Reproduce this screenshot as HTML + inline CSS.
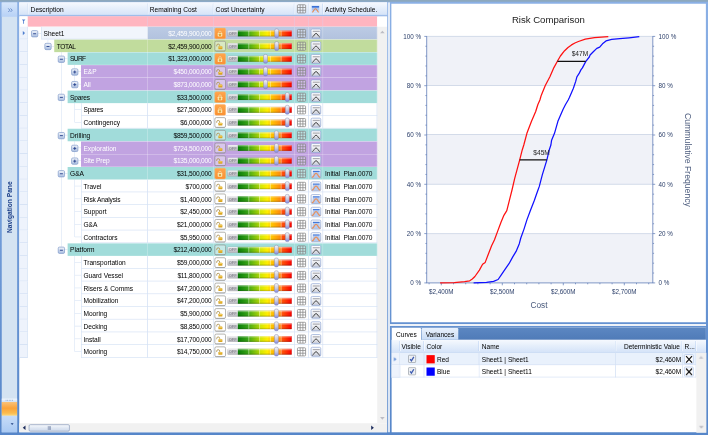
<!DOCTYPE html>
<html><head><meta charset="utf-8"><title>Risk Comparison</title><style>
html,body{margin:0;padding:0}
body{width:708px;height:435px;overflow:hidden;position:relative;background:linear-gradient(#8bb0e5,#7ea6df 30%,#5686c9);font-family:"Liberation Sans",sans-serif;color:#000}
#w{position:absolute;left:0;top:0;width:5664px;height:3480px;overflow:hidden;transform:scale(0.125);transform-origin:0 0;will-change:transform;font-size:52.8px}
#w div{position:absolute}
.t{white-space:nowrap}
.ic{position:absolute;overflow:visible}
</style></head><body>
<svg width="0" height="0" style="position:absolute">
<defs>
<linearGradient id="gsl" x1="0" x2="1" y1="0" y2="0">
<stop offset="0" stop-color="#087c08"/><stop offset="0.19" stop-color="#38a416"/><stop offset="0.21" stop-color="#4aac12"/><stop offset="0.39" stop-color="#a6d206"/>
<stop offset="0.41" stop-color="#cfe604"/><stop offset="0.55" stop-color="#ffee00"/><stop offset="0.61" stop-color="#ffcc00"/><stop offset="0.79" stop-color="#ff8a0a"/><stop offset="0.81" stop-color="#ff5c0a"/><stop offset="1" stop-color="#fa0000"/>
</linearGradient>
<linearGradient id="gsh" x1="0" x2="0" y1="0" y2="1">
<stop offset="0" stop-color="#fff" stop-opacity=".55"/><stop offset="0.35" stop-color="#fff" stop-opacity="0"/><stop offset="0.7" stop-color="#000" stop-opacity="0"/><stop offset="1" stop-color="#000" stop-opacity=".22"/>
</linearGradient>
<linearGradient id="goff" x1="0" x2="0" y1="0" y2="1">
<stop offset="0" stop-color="#f0f0f2"/><stop offset="0.5" stop-color="#cdcdd2"/><stop offset="1" stop-color="#b6b6bc"/>
</linearGradient>
<linearGradient id="gth" x1="0" x2="0" y1="0" y2="1">
<stop offset="0" stop-color="#f4f4fa"/><stop offset="0.55" stop-color="#c8c8dc"/><stop offset="1" stop-color="#7f86e8"/>
</linearGradient>
<linearGradient id="glk" x1="0" x2="0" y1="0" y2="1">
<stop offset="0" stop-color="#ffa64d"/><stop offset="1" stop-color="#f98f30"/>
</linearGradient>
<linearGradient id="gcb" x1="0" x2="0" y1="0" y2="1">
<stop offset="0" stop-color="#ffffff"/><stop offset="0.35" stop-color="#f4f5f8"/><stop offset="1" stop-color="#c6cad6"/>
</linearGradient>
<linearGradient id="gex" x1="0" x2="0" y1="0" y2="1">
<stop offset="0" stop-color="#f4f7fc"/><stop offset="1" stop-color="#a9bde0"/>
</linearGradient>
<symbol id="slider" viewBox="0 0 65 10" overflow="visible">
 <rect x="0" y="1.900" width="64.600" height="6.200" rx="1" fill="#8e8e98" opacity=".5"/>
 <rect x="0.3" y="2.050" width="10.600" height="5.800" rx="0.8" fill="url(#goff)"/>
 <rect x="10.500" y="2.050" width="53.800" height="5.800" fill="url(#gsl)"/>
 <rect x="10.500" y="2.050" width="53.800" height="5.800" fill="url(#gsh)"/>
 <path d="M21.400 2.100V7.800M32.200 2.100V7.800M43 2.100V7.800M53.800 2.100V7.800" stroke="#fff" stroke-opacity=".78" stroke-width=".55"/>
 <text x="1.300" y="6.500" font-family="Liberation Sans, sans-serif" font-weight="bold" font-size="3.700" fill="#8e8e96" textLength="8.200" lengthAdjust="spacingAndGlyphs">OFF</text>
</symbol>
<symbol id="thumb" viewBox="0 0 5 10" overflow="visible">
 <rect x="0.4" y="0.3" width="4.1" height="9.3" rx="1.6" fill="url(#gth)" stroke="#8a8aa8" stroke-width=".5"/>
</symbol>
<symbol id="lockon" viewBox="0 0 11 11" overflow="visible">
 <rect x="0.1" y="0.1" width="10.9" height="10.8" rx="1.4" fill="url(#glk)" stroke="#ffb56a" stroke-width=".5"/>
 <path d="M4 5.200V4.500a1.350 1.350 0 0 1 2.700 0V5.200" fill="none" stroke="#f1d9a4" stroke-width=".75"/>
 <rect x="3" y="5" width="4.600" height="3.700" rx=".5" fill="#fbe7ae"/>
 <rect x="4.200" y="5.900" width="2.200" height="2.100" rx=".4" fill="#e0a236"/>
</symbol>
<symbol id="lockoff" viewBox="0 0 11.400 10.500" overflow="visible">
 <rect x="0.35" y="0.35" width="10.700" height="9.800" rx="1.400" fill="#fff" fill-opacity=".38" stroke="#8c8c88" stroke-width=".65"/>
 <path d="M.9 10.150H10.500" stroke="#777" stroke-width=".5" opacity=".6"/>
 <path d="M2.200 5.500V4.700a1.500 1.500 0 0 1 3 0V5.600" fill="none" stroke="#b29a5e" stroke-width=".95"/>
 <rect x="3.900" y="5.400" width="4" height="2.900" rx=".5" fill="#dba622"/>
 <rect x="4.300" y="5.700" width="3.200" height="1" rx=".4" fill="#f3d060"/>
</symbol>
<symbol id="gridic" viewBox="0 0 9 9" overflow="visible">
 <rect x="0.3" y="0.3" width="8.4" height="8.4" rx=".9" fill="#fff" fill-opacity=".28"/>
 <path d="M0.3 1.1a.8 .8 0 0 1 .8-.8H7.9a.8 .8 0 0 1 .8 .8V7.9a.8 .8 0 0 1-.8 .8H1.1a.8 .8 0 0 1-.8-.8ZM3.1 .3V8.7M5.9 .3V8.7M.3 3.1H8.7M.3 5.9H8.7" fill="none" stroke="#868686" stroke-width=".78"/>
</symbol>
<symbol id="chartk" viewBox="0 0 10.300 9.600" overflow="visible">
 <rect x="0.3" y="0.3" width="9.700" height="9" rx="1.300" fill="url(#gcb)" stroke="#93a9d6" stroke-width=".75"/>
 <rect x="2" y="2" width="7" height="1.200" fill="#acacb2"/>
 <path d="M1.900 8.200C3.400 7.400 3.800 4.700 5.300 4.700S7.200 7.400 8.700 8.200" fill="none" stroke="#444" stroke-width=".98" stroke-linecap="round"/>
</symbol>
<symbol id="chartc" viewBox="0 0 10.300 9.600" overflow="visible">
 <rect x="0.3" y="0.3" width="9.700" height="9" rx="1.300" fill="url(#gcb)" stroke="#93a9d6" stroke-width=".75"/>
 <rect x="2.100" y="3.100" width="6.800" height="5.600" fill="#b2caf2"/>
 <rect x="2.100" y="2.050" width="6.800" height="1.150" fill="#3a72d8"/>
 <path d="M1.700 8.400C3.300 7.600 3.700 4.700 5.300 4.700S7.300 7.600 8.900 8.400" fill="none" stroke="#e8905a" stroke-width="1.250" stroke-linecap="round"/>
</symbol>
<symbol id="charth" viewBox="0 0 7.200 6.600" overflow="visible">
 <rect x="-.2" y="-.2" width="7.600" height="7" fill="#a9c5f3" stroke="#d9e6fa" stroke-width=".4"/>
 <rect x="0" y="4.600" width="7.200" height="2" fill="#d3e2fa"/>
 <rect x="0" y="0" width="7.200" height="1.600" fill="#3a70d4"/>
 <path d="M.4 6.300C1.800 5.700 2.100 2.700 3.600 2.700S5.400 5.700 6.800 6.300" fill="none" stroke="#e8894a" stroke-width="1.050"/>
</symbol>
<symbol id="exm" viewBox="0 0 7 7" overflow="visible">
 <rect x="0.35" y="0.35" width="6.3" height="6.3" rx="1.2" fill="url(#gex)" stroke="#7f99c8" stroke-width=".7"/>
 <path d="M2 3.500H5" stroke="#24408a" stroke-width=".9"/>
</symbol>
<symbol id="exp" viewBox="0 0 7 7" overflow="visible">
 <rect x="0.35" y="0.35" width="6.3" height="6.3" rx="1.2" fill="url(#gex)" stroke="#7f99c8" stroke-width=".7"/>
 <path d="M2 3.500H5M3.500 2V5" stroke="#24408a" stroke-width=".9"/>
</symbol>
</defs></svg>
<div id="w">
<div style="left:0px;top:0px;width:5664px;height:13.6px;background:#8da8bd"></div>
<div style="left:14.4px;top:20px;width:122.4px;height:3438.4px;background:#d4e3f2"></div>
<div style="left:14.4px;top:20px;width:122.4px;height:114.4px;background:linear-gradient(#d6e6fb,#b7d1f6)"></div>
<svg class="ic" style="left:63.2px;top:64px;width:40px;height:35.2px" viewBox="0 0 5 4.400"><path d="M.4 .4L2 2.200L.4 4M2.700 .4L4.300 2.200L2.700 4" fill="none" stroke="#5078bc" stroke-width=".75"/></svg>
<div style="left:14.4px;top:3188.8px;width:122.4px;height:27.2px;background:linear-gradient(#f4f8fd,#cfe0f5)"></div>
<svg class="ic" style="left:43.2px;top:3196.8px;width:64px;height:11.2px" viewBox="0 0 8 1.400"><path d="M.3 .7H7.900" stroke="#6f93cc" stroke-width=".8" stroke-dasharray=".75 .85"/></svg>
<div style="left:14.4px;top:3216px;width:122.4px;height:109.6px;background:linear-gradient(#f9c27a,#fba33a 45%,#fbbb4e 80%,#fdd77a)"></div>
<div style="left:14.4px;top:3327.2px;width:122.4px;height:131.2px;background:linear-gradient(#c7dcf8,#a9c9f3)"></div>
<svg class="ic" style="left:82.4px;top:3380.8px;width:32px;height:24px" viewBox="0 0 4 3"><path d="M.4 .5H3.400L1.900 2.400Z" fill="#1f3f80"/></svg>
<div class="t" style="left:76.8px;top:1658.4px;font-size:53.2px;font-weight:bold;color:#1c3f88;transform:translate(-50%,-50%) rotate(-90deg)">Navigation Pane</div>
<div style="left:154.4px;top:19.2px;width:2942.4px;height:3439.2px;background:#fff"></div>
<div style="left:3105.2px;top:19.2px;width:14px;height:3439.2px;background:#eef3fa"></div>
<div style="left:154.4px;top:19.2px;width:2942.4px;height:103.2px;background:linear-gradient(#f6f9fe,#e6effb 45%,#d5e3f8)"></div>
<div style="left:154.4px;top:119.2px;width:2942.4px;height:12.8px;background:#9fbdea"></div>
<div style="left:217.6px;top:28.8px;width:4.8px;height:86.4px;background:#b9d0f1"></div>
<div style="left:222.4px;top:28.8px;width:4.8px;height:86.4px;background:#fff"></div>
<div style="left:1176px;top:28.8px;width:4.8px;height:86.4px;background:#b9d0f1"></div>
<div style="left:1180.8px;top:28.8px;width:4.8px;height:86.4px;background:#fff"></div>
<div style="left:1703.2px;top:28.8px;width:4.8px;height:86.4px;background:#b9d0f1"></div>
<div style="left:1708px;top:28.8px;width:4.8px;height:86.4px;background:#fff"></div>
<div style="left:2351.2px;top:28.8px;width:4.8px;height:86.4px;background:#b9d0f1"></div>
<div style="left:2356px;top:28.8px;width:4.8px;height:86.4px;background:#fff"></div>
<div style="left:2464px;top:28.8px;width:4.8px;height:86.4px;background:#b9d0f1"></div>
<div style="left:2468.8px;top:28.8px;width:4.8px;height:86.4px;background:#fff"></div>
<div style="left:2578.4px;top:28.8px;width:4.8px;height:86.4px;background:#b9d0f1"></div>
<div style="left:2583.2px;top:28.8px;width:4.8px;height:86.4px;background:#fff"></div>
<div class="t" style="left:244.8px;top:28px;height:100.8px;line-height:100.8px;font-size:52.96px;">Description</div>
<div class="t" style="left:1197.6px;top:28px;height:100.8px;line-height:100.8px;font-size:52.96px;">Remaining Cost</div>
<div class="t" style="left:1724.8px;top:28px;height:100.8px;line-height:100.8px;font-size:52.96px;">Cost Uncertainty</div>
<div class="t" style="left:2600px;top:28px;height:100.8px;line-height:100.8px;font-size:52.96px;">Activity Schedule.</div>
<svg class="ic" style="left:2376.8px;top:35.2px;width:70.4px;height:72px" viewBox="0 0 8.80 9.00"><use href="#gridic" width="8.80" height="9.00"/></svg>
<svg class="ic" style="left:2495.2px;top:48px;width:57.6px;height:52.8px" viewBox="0 0 7.20 6.60"><use href="#charth" width="7.20" height="6.60"/></svg>
<div style="left:156.8px;top:130.4px;width:64.8px;height:82.4px;background:#fff"></div>
<div style="left:221.6px;top:130.4px;width:2796.8px;height:82.4px;background:#ffb5c0"></div>
<div style="left:1177.6px;top:132.8px;width:5.2px;height:80px;background:#e9c6dc"></div>
<div style="left:1704.8px;top:132.8px;width:5.2px;height:80px;background:#e9c6dc"></div>
<div style="left:2352.8px;top:132.8px;width:5.2px;height:80px;background:#e9c6dc"></div>
<div style="left:2465.6px;top:132.8px;width:5.2px;height:80px;background:#e9c6dc"></div>
<div style="left:2580px;top:132.8px;width:5.2px;height:80px;background:#e9c6dc"></div>
<svg class="ic" style="left:172.8px;top:153.6px;width:32px;height:40px" viewBox="0 0 4 5"><path d="M.2 .3H3.800L2.400 1.700V4.600H1.600V1.700Z" fill="#4a7ad0"/></svg>
<div style="left:3018.4px;top:132.8px;width:78.4px;height:80.8px;background:#fff"></div>
<div style="left:3018.4px;top:213.6px;width:78.4px;height:3172.8px;background:#f1f1f1"></div>
<svg class="ic" style="left:3039.2px;top:242.4px;width:40px;height:27.2px" viewBox="0 0 5 3.400"><path d="M.2 3.100L2.500 .4L4.800 3.100Z" fill="#bcbcc4"/></svg>
<svg class="ic" style="left:3039.2px;top:3334.4px;width:40px;height:27.2px" viewBox="0 0 5 3.400"><path d="M.2 .3L2.500 3L4.800 .3Z" fill="#bcbcc4"/></svg>
<div style="left:154.4px;top:3386.4px;width:2942.4px;height:72px;background:#f1f1f1"></div>
<svg class="ic" style="left:179.2px;top:3402.4px;width:27.2px;height:40px" viewBox="0 0 3.400 5"><path d="M3.100 .2L.4 2.500L3.100 4.800Z" fill="#1c2c5c"/></svg>
<svg class="ic" style="left:2967.2px;top:3402.4px;width:27.2px;height:40px" viewBox="0 0 3.400 5"><path d="M.3 .2L3 2.500L.3 4.800Z" fill="#1c2c5c"/></svg>
<div style="left:230.4px;top:3395.2px;width:328px;height:56.8px;background:linear-gradient(#f7f9fc,#dfe7f3 50%,#cfdaec);border:5.6px solid #7f93b8;border-radius:12.8px;box-sizing:border-box"></div>
<svg class="ic" style="left:382.4px;top:3408.8px;width:25.6px;height:30.4px" viewBox="0 0 3.200 3.800"><path d="M.5 0V3.800M1.600 0V3.800M2.700 0V3.800" stroke="#5f7299" stroke-width=".55"/></svg>
<div style="left:302.4px;top:266.8px;width:28.8px;height:5.12px;background:#dbe6f6"></div>
<div style="left:380.64px;top:315.44px;width:5.12px;height:28.56px;background:#dbe6f6"></div>
<div style="left:409.6px;top:368.64px;width:24px;height:5.12px;background:#dbe6f6"></div>
<div style="left:487.84px;top:417.36px;width:5.12px;height:1556.48px;background:#dbe6f6"></div>
<div style="left:516.8px;top:467.28px;width:24px;height:5.12px;background:#dbe6f6"></div>
<div style="left:516.8px;top:772.88px;width:24px;height:5.12px;background:#dbe6f6"></div>
<div style="left:516.8px;top:1078.48px;width:24px;height:5.12px;background:#dbe6f6"></div>
<div style="left:516.8px;top:1384.08px;width:24px;height:5.12px;background:#dbe6f6"></div>
<div style="left:516.8px;top:1995.28px;width:24px;height:5.12px;background:#dbe6f6"></div>
<div style="left:595.04px;top:519.2px;width:5.12px;height:154.4px;background:#dbe6f6"></div>
<div style="left:624px;top:569.2px;width:24px;height:5.12px;background:#dbe6f6"></div>
<div style="left:624px;top:671.04px;width:24px;height:5.12px;background:#dbe6f6"></div>
<div style="left:595.04px;top:824.8px;width:5.12px;height:154.4px;background:#dbe6f6"></div>
<div style="left:597.6px;top:874.72px;width:50.4px;height:5.12px;background:#dbe6f6"></div>
<div style="left:597.6px;top:976.64px;width:50.4px;height:5.12px;background:#dbe6f6"></div>
<div style="left:595.04px;top:1130.4px;width:5.12px;height:154.4px;background:#dbe6f6"></div>
<div style="left:624px;top:1180.32px;width:24px;height:5.12px;background:#dbe6f6"></div>
<div style="left:624px;top:1282.24px;width:24px;height:5.12px;background:#dbe6f6"></div>
<div style="left:595.04px;top:1436px;width:5.12px;height:460px;background:#dbe6f6"></div>
<div style="left:597.6px;top:1485.92px;width:50.4px;height:5.12px;background:#dbe6f6"></div>
<div style="left:597.6px;top:1587.84px;width:50.4px;height:5.12px;background:#dbe6f6"></div>
<div style="left:597.6px;top:1689.68px;width:50.4px;height:5.12px;background:#dbe6f6"></div>
<div style="left:597.6px;top:1791.52px;width:50.4px;height:5.12px;background:#dbe6f6"></div>
<div style="left:597.6px;top:1893.36px;width:50.4px;height:5.12px;background:#dbe6f6"></div>
<div style="left:595.04px;top:2047.12px;width:5.12px;height:765.6px;background:#dbe6f6"></div>
<div style="left:597.6px;top:2097.12px;width:50.4px;height:5.12px;background:#dbe6f6"></div>
<div style="left:597.6px;top:2198.96px;width:50.4px;height:5.12px;background:#dbe6f6"></div>
<div style="left:597.6px;top:2300.88px;width:50.4px;height:5.12px;background:#dbe6f6"></div>
<div style="left:597.6px;top:2402.72px;width:50.4px;height:5.12px;background:#dbe6f6"></div>
<div style="left:597.6px;top:2504.56px;width:50.4px;height:5.12px;background:#dbe6f6"></div>
<div style="left:597.6px;top:2606.48px;width:50.4px;height:5.12px;background:#dbe6f6"></div>
<div style="left:597.6px;top:2708.32px;width:50.4px;height:5.12px;background:#dbe6f6"></div>
<div style="left:597.6px;top:2810.16px;width:50.4px;height:5.12px;background:#dbe6f6"></div>
<div style="left:156.8px;top:213.6px;width:64.8px;height:101.84px;background:#eef3fc;border-bottom:5.6px solid #c9d9f1;border-right:5.12px solid #d3e0f4;box-sizing:border-box"></div>
<div style="left:331.2px;top:213.6px;width:848.8px;height:101.84px;background:#f1f5fc;border-left:5.12px solid #d3e0f4;border-bottom:5.12px solid #d3e0f4;box-sizing:border-box"></div>
<div style="left:1180px;top:213.6px;width:1838.4px;height:101.84px;background:linear-gradient(#bccbe4,#b2c2de)"></div>
<div style="left:1177.44px;top:213.6px;width:5.12px;height:101.84px;background:rgba(255,255,255,.32)"></div>
<div style="left:1704.64px;top:213.6px;width:5.12px;height:101.84px;background:rgba(255,255,255,.32)"></div>
<div style="left:2352.64px;top:213.6px;width:5.12px;height:101.84px;background:rgba(255,255,255,.32)"></div>
<div style="left:2465.44px;top:213.6px;width:5.12px;height:101.84px;background:rgba(255,255,255,.32)"></div>
<div style="left:2579.84px;top:213.6px;width:5.12px;height:101.84px;background:rgba(255,255,255,.32)"></div>
<div style="left:3013.28px;top:213.6px;width:5.12px;height:101.84px;background:rgba(255,255,255,.3)"></div>
<div class="t" style="left:348px;top:213.6px;height:101.864px;line-height:111.464px;letter-spacing:0px;color:#000">Sheet1</div>
<div class="t" style="left:1180px;width:511.2px;text-align:right;top:213.6px;height:101.864px;line-height:111.464px;letter-spacing:-1.6px;color:#fff">$2,459,900,000</div>
<svg class="ic" style="left:248.8px;top:242px;width:56px;height:56px" viewBox="0 0 7.00 7.00"><use href="#exm" width="7.00" height="7.00"/></svg>
<svg class="ic" style="left:1716.8px;top:224.4px;width:88.8px;height:87.2px" viewBox="0 0 11.10 10.90"><use href="#lockon" width="11.10" height="10.90"/></svg>
<svg class="ic" style="left:1819.2px;top:227.6px;width:520px;height:80px" viewBox="0 0 65.00 10.00"><use href="#slider" width="65.00" height="10.00"/></svg>
<svg class="ic" style="left:2194px;top:228.8px;width:39.2px;height:76.8px" viewBox="0 0 4.90 9.60"><use href="#thumb" width="4.90" height="9.60"/></svg>
<svg class="ic" style="left:2376.8px;top:233.2px;width:70.4px;height:69.6px" viewBox="0 0 8.80 8.70"><use href="#gridic" width="8.80" height="8.70"/></svg>
<svg class="ic" style="left:2486.4px;top:229.6px;width:82.4px;height:76.8px" viewBox="0 0 10.30 9.60"><use href="#chartk" width="10.30" height="9.60"/></svg>
<div style="left:156.8px;top:315.44px;width:64.8px;height:101.84px;background:#eef3fc;border-bottom:5.6px solid #c9d9f1;border-right:5.12px solid #d3e0f4;box-sizing:border-box"></div>
<div style="left:433.6px;top:317.2px;width:2584.8px;height:100.08px;background:#c1dc9d"></div>
<div style="left:1177.44px;top:315.44px;width:5.12px;height:101.84px;background:rgba(255,255,255,.32)"></div>
<div style="left:1704.64px;top:315.44px;width:5.12px;height:101.84px;background:rgba(255,255,255,.32)"></div>
<div style="left:2352.64px;top:315.44px;width:5.12px;height:101.84px;background:rgba(255,255,255,.32)"></div>
<div style="left:2465.44px;top:315.44px;width:5.12px;height:101.84px;background:rgba(255,255,255,.32)"></div>
<div style="left:2579.84px;top:315.44px;width:5.12px;height:101.84px;background:rgba(255,255,255,.32)"></div>
<div style="left:3013.28px;top:315.44px;width:5.12px;height:101.84px;background:rgba(255,255,255,.3)"></div>
<div class="t" style="left:453.2px;top:315.44px;height:101.864px;line-height:111.464px;letter-spacing:-2.72px;color:#000">TOTAL</div>
<div class="t" style="left:1180px;width:511.2px;text-align:right;top:315.44px;height:101.864px;line-height:111.464px;letter-spacing:-1.6px;color:#000">$2,459,900,000</div>
<svg class="ic" style="left:356px;top:343.84px;width:56px;height:56px" viewBox="0 0 7.00 7.00"><use href="#exm" width="7.00" height="7.00"/></svg>
<svg class="ic" style="left:1716px;top:327.04px;width:91.2px;height:84px" viewBox="0 0 11.40 10.50"><use href="#lockoff" width="11.40" height="10.50"/></svg>
<svg class="ic" style="left:1819.2px;top:329.44px;width:520px;height:80px" viewBox="0 0 65.00 10.00"><use href="#slider" width="65.00" height="10.00"/></svg>
<svg class="ic" style="left:2194px;top:330.64px;width:39.2px;height:76.8px" viewBox="0 0 4.90 9.60"><use href="#thumb" width="4.90" height="9.60"/></svg>
<svg class="ic" style="left:2376.8px;top:335.04px;width:70.4px;height:69.6px" viewBox="0 0 8.80 8.70"><use href="#gridic" width="8.80" height="8.70"/></svg>
<svg class="ic" style="left:2486.4px;top:331.44px;width:82.4px;height:76.8px" viewBox="0 0 10.30 9.60"><use href="#chartk" width="10.30" height="9.60"/></svg>
<div style="left:156.8px;top:417.36px;width:64.8px;height:101.84px;background:#eef3fc;border-bottom:5.6px solid #c9d9f1;border-right:5.12px solid #d3e0f4;box-sizing:border-box"></div>
<div style="left:540.8px;top:419.12px;width:2477.6px;height:100.08px;background:#a1dcda"></div>
<div style="left:1177.44px;top:417.36px;width:5.12px;height:101.84px;background:rgba(255,255,255,.32)"></div>
<div style="left:1704.64px;top:417.36px;width:5.12px;height:101.84px;background:rgba(255,255,255,.32)"></div>
<div style="left:2352.64px;top:417.36px;width:5.12px;height:101.84px;background:rgba(255,255,255,.32)"></div>
<div style="left:2465.44px;top:417.36px;width:5.12px;height:101.84px;background:rgba(255,255,255,.32)"></div>
<div style="left:2579.84px;top:417.36px;width:5.12px;height:101.84px;background:rgba(255,255,255,.32)"></div>
<div style="left:3013.28px;top:417.36px;width:5.12px;height:101.84px;background:rgba(255,255,255,.3)"></div>
<div class="t" style="left:560.4px;top:417.36px;height:101.864px;line-height:111.464px;letter-spacing:-4.96px;color:#000">SURF</div>
<div class="t" style="left:1180px;width:511.2px;text-align:right;top:417.36px;height:101.864px;line-height:111.464px;letter-spacing:-1.6px;color:#000">$1,323,000,000</div>
<svg class="ic" style="left:463.2px;top:445.76px;width:56px;height:56px" viewBox="0 0 7.00 7.00"><use href="#exm" width="7.00" height="7.00"/></svg>
<svg class="ic" style="left:1716.8px;top:428.16px;width:88.8px;height:87.2px" viewBox="0 0 11.10 10.90"><use href="#lockon" width="11.10" height="10.90"/></svg>
<svg class="ic" style="left:1819.2px;top:431.36px;width:520px;height:80px" viewBox="0 0 65.00 10.00"><use href="#slider" width="65.00" height="10.00"/></svg>
<svg class="ic" style="left:2105.2px;top:432.56px;width:39.2px;height:76.8px" viewBox="0 0 4.90 9.60"><use href="#thumb" width="4.90" height="9.60"/></svg>
<svg class="ic" style="left:2376.8px;top:436.96px;width:70.4px;height:69.6px" viewBox="0 0 8.80 8.70"><use href="#gridic" width="8.80" height="8.70"/></svg>
<svg class="ic" style="left:2486.4px;top:433.36px;width:82.4px;height:76.8px" viewBox="0 0 10.30 9.60"><use href="#chartk" width="10.30" height="9.60"/></svg>
<div style="left:156.8px;top:519.2px;width:64.8px;height:101.84px;background:#eef3fc;border-bottom:5.6px solid #c9d9f1;border-right:5.12px solid #d3e0f4;box-sizing:border-box"></div>
<div style="left:648px;top:520.96px;width:2370.4px;height:100.08px;background:#c1a3e1"></div>
<div style="left:1177.44px;top:519.2px;width:5.12px;height:101.84px;background:rgba(255,255,255,.32)"></div>
<div style="left:1704.64px;top:519.2px;width:5.12px;height:101.84px;background:rgba(255,255,255,.32)"></div>
<div style="left:2352.64px;top:519.2px;width:5.12px;height:101.84px;background:rgba(255,255,255,.32)"></div>
<div style="left:2465.44px;top:519.2px;width:5.12px;height:101.84px;background:rgba(255,255,255,.32)"></div>
<div style="left:2579.84px;top:519.2px;width:5.12px;height:101.84px;background:rgba(255,255,255,.32)"></div>
<div style="left:3013.28px;top:519.2px;width:5.12px;height:101.84px;background:rgba(255,255,255,.3)"></div>
<div class="t" style="left:667.6px;top:519.2px;height:101.864px;line-height:111.464px;letter-spacing:0px;color:#fff">E&amp;P</div>
<div class="t" style="left:1180px;width:511.2px;text-align:right;top:519.2px;height:101.864px;line-height:111.464px;letter-spacing:-1.6px;color:#fff">$450,000,000</div>
<svg class="ic" style="left:570.4px;top:547.6px;width:56px;height:56px" viewBox="0 0 7.00 7.00"><use href="#exp" width="7.00" height="7.00"/></svg>
<svg class="ic" style="left:1716px;top:530.8px;width:91.2px;height:84px" viewBox="0 0 11.40 10.50"><use href="#lockoff" width="11.40" height="10.50"/></svg>
<svg class="ic" style="left:1819.2px;top:533.2px;width:520px;height:80px" viewBox="0 0 65.00 10.00"><use href="#slider" width="65.00" height="10.00"/></svg>
<svg class="ic" style="left:2105.2px;top:534.4px;width:39.2px;height:76.8px" viewBox="0 0 4.90 9.60"><use href="#thumb" width="4.90" height="9.60"/></svg>
<svg class="ic" style="left:2376.8px;top:538.8px;width:70.4px;height:69.6px" viewBox="0 0 8.80 8.70"><use href="#gridic" width="8.80" height="8.70"/></svg>
<svg class="ic" style="left:2486.4px;top:535.2px;width:82.4px;height:76.8px" viewBox="0 0 10.30 9.60"><use href="#chartk" width="10.30" height="9.60"/></svg>
<div style="left:156.8px;top:621.04px;width:64.8px;height:101.84px;background:#eef3fc;border-bottom:5.6px solid #c9d9f1;border-right:5.12px solid #d3e0f4;box-sizing:border-box"></div>
<div style="left:648px;top:622.8px;width:2370.4px;height:100.08px;background:#c1a3e1"></div>
<div style="left:1177.44px;top:621.04px;width:5.12px;height:101.84px;background:rgba(255,255,255,.32)"></div>
<div style="left:1704.64px;top:621.04px;width:5.12px;height:101.84px;background:rgba(255,255,255,.32)"></div>
<div style="left:2352.64px;top:621.04px;width:5.12px;height:101.84px;background:rgba(255,255,255,.32)"></div>
<div style="left:2465.44px;top:621.04px;width:5.12px;height:101.84px;background:rgba(255,255,255,.32)"></div>
<div style="left:2579.84px;top:621.04px;width:5.12px;height:101.84px;background:rgba(255,255,255,.32)"></div>
<div style="left:3013.28px;top:621.04px;width:5.12px;height:101.84px;background:rgba(255,255,255,.3)"></div>
<div class="t" style="left:667.6px;top:621.04px;height:101.864px;line-height:111.464px;letter-spacing:0px;color:#fff">All</div>
<div class="t" style="left:1180px;width:511.2px;text-align:right;top:621.04px;height:101.864px;line-height:111.464px;letter-spacing:-1.6px;color:#fff">$873,000,000</div>
<svg class="ic" style="left:570.4px;top:649.44px;width:56px;height:56px" viewBox="0 0 7.00 7.00"><use href="#exp" width="7.00" height="7.00"/></svg>
<svg class="ic" style="left:1716px;top:632.64px;width:91.2px;height:84px" viewBox="0 0 11.40 10.50"><use href="#lockoff" width="11.40" height="10.50"/></svg>
<svg class="ic" style="left:1819.2px;top:635.04px;width:520px;height:80px" viewBox="0 0 65.00 10.00"><use href="#slider" width="65.00" height="10.00"/></svg>
<svg class="ic" style="left:2105.2px;top:636.24px;width:39.2px;height:76.8px" viewBox="0 0 4.90 9.60"><use href="#thumb" width="4.90" height="9.60"/></svg>
<svg class="ic" style="left:2376.8px;top:640.64px;width:70.4px;height:69.6px" viewBox="0 0 8.80 8.70"><use href="#gridic" width="8.80" height="8.70"/></svg>
<svg class="ic" style="left:2486.4px;top:637.04px;width:82.4px;height:76.8px" viewBox="0 0 10.30 9.60"><use href="#chartk" width="10.30" height="9.60"/></svg>
<div style="left:156.8px;top:722.96px;width:64.8px;height:101.84px;background:#eef3fc;border-bottom:5.6px solid #c9d9f1;border-right:5.12px solid #d3e0f4;box-sizing:border-box"></div>
<div style="left:540.8px;top:724.72px;width:2477.6px;height:100.08px;background:#a1dcda"></div>
<div style="left:1177.44px;top:722.96px;width:5.12px;height:101.84px;background:rgba(255,255,255,.32)"></div>
<div style="left:1704.64px;top:722.96px;width:5.12px;height:101.84px;background:rgba(255,255,255,.32)"></div>
<div style="left:2352.64px;top:722.96px;width:5.12px;height:101.84px;background:rgba(255,255,255,.32)"></div>
<div style="left:2465.44px;top:722.96px;width:5.12px;height:101.84px;background:rgba(255,255,255,.32)"></div>
<div style="left:2579.84px;top:722.96px;width:5.12px;height:101.84px;background:rgba(255,255,255,.32)"></div>
<div style="left:3013.28px;top:722.96px;width:5.12px;height:101.84px;background:rgba(255,255,255,.3)"></div>
<div class="t" style="left:560.4px;top:722.96px;height:101.864px;line-height:111.464px;letter-spacing:-1.6px;color:#000">Spares</div>
<div class="t" style="left:1180px;width:511.2px;text-align:right;top:722.96px;height:101.864px;line-height:111.464px;letter-spacing:-1.6px;color:#000">$33,500,000</div>
<svg class="ic" style="left:463.2px;top:751.36px;width:56px;height:56px" viewBox="0 0 7.00 7.00"><use href="#exm" width="7.00" height="7.00"/></svg>
<svg class="ic" style="left:1716.8px;top:733.76px;width:88.8px;height:87.2px" viewBox="0 0 11.10 10.90"><use href="#lockon" width="11.10" height="10.90"/></svg>
<svg class="ic" style="left:1819.2px;top:736.96px;width:520px;height:80px" viewBox="0 0 65.00 10.00"><use href="#slider" width="65.00" height="10.00"/></svg>
<svg class="ic" style="left:2278.8px;top:738.16px;width:39.2px;height:76.8px" viewBox="0 0 4.90 9.60"><use href="#thumb" width="4.90" height="9.60"/></svg>
<svg class="ic" style="left:2376.8px;top:742.56px;width:70.4px;height:69.6px" viewBox="0 0 8.80 8.70"><use href="#gridic" width="8.80" height="8.70"/></svg>
<svg class="ic" style="left:2486.4px;top:738.96px;width:82.4px;height:76.8px" viewBox="0 0 10.30 9.60"><use href="#chartk" width="10.30" height="9.60"/></svg>
<div style="left:156.8px;top:824.8px;width:64.8px;height:101.84px;background:#eef3fc;border-bottom:5.6px solid #c9d9f1;border-right:5.12px solid #d3e0f4;box-sizing:border-box"></div>
<div style="left:648px;top:824.8px;width:532px;height:101.84px;border-left:5.12px solid #d3e0f4;border-bottom:5.12px solid #d3e0f4;box-sizing:border-box"></div>
<div style="left:1180px;top:824.8px;width:1838.4px;height:101.84px;border-bottom:5.12px solid #d3e0f4;box-sizing:border-box"></div>
<div style="left:1177.44px;top:824.8px;width:5.12px;height:101.84px;background:#d3e0f4"></div>
<div style="left:1704.64px;top:824.8px;width:5.12px;height:101.84px;background:#d3e0f4"></div>
<div style="left:2352.64px;top:824.8px;width:5.12px;height:101.84px;background:#d3e0f4"></div>
<div style="left:2465.44px;top:824.8px;width:5.12px;height:101.84px;background:#d3e0f4"></div>
<div style="left:2579.84px;top:824.8px;width:5.12px;height:101.84px;background:#d3e0f4"></div>
<div style="left:3013.28px;top:824.8px;width:5.12px;height:101.84px;background:#d3e0f4"></div>
<div class="t" style="left:667.6px;top:824.8px;height:101.864px;line-height:111.464px;letter-spacing:-1.6px;color:#000">Spares</div>
<div class="t" style="left:1180px;width:511.2px;text-align:right;top:824.8px;height:101.864px;line-height:111.464px;letter-spacing:-1.6px;color:#000">$27,500,000</div>
<svg class="ic" style="left:1716.8px;top:835.6px;width:88.8px;height:87.2px" viewBox="0 0 11.10 10.90"><use href="#lockon" width="11.10" height="10.90"/></svg>
<svg class="ic" style="left:1819.2px;top:838.8px;width:520px;height:80px" viewBox="0 0 65.00 10.00"><use href="#slider" width="65.00" height="10.00"/></svg>
<svg class="ic" style="left:2278.8px;top:840px;width:39.2px;height:76.8px" viewBox="0 0 4.90 9.60"><use href="#thumb" width="4.90" height="9.60"/></svg>
<svg class="ic" style="left:2376.8px;top:844.4px;width:70.4px;height:69.6px" viewBox="0 0 8.80 8.70"><use href="#gridic" width="8.80" height="8.70"/></svg>
<svg class="ic" style="left:2486.4px;top:840.8px;width:82.4px;height:76.8px" viewBox="0 0 10.30 9.60"><use href="#chartk" width="10.30" height="9.60"/></svg>
<div style="left:156.8px;top:926.64px;width:64.8px;height:101.84px;background:#eef3fc;border-bottom:5.6px solid #c9d9f1;border-right:5.12px solid #d3e0f4;box-sizing:border-box"></div>
<div style="left:648px;top:926.64px;width:532px;height:101.84px;border-left:5.12px solid #d3e0f4;border-bottom:5.12px solid #d3e0f4;box-sizing:border-box"></div>
<div style="left:1180px;top:926.64px;width:1838.4px;height:101.84px;border-bottom:5.12px solid #d3e0f4;box-sizing:border-box"></div>
<div style="left:1177.44px;top:926.64px;width:5.12px;height:101.84px;background:#d3e0f4"></div>
<div style="left:1704.64px;top:926.64px;width:5.12px;height:101.84px;background:#d3e0f4"></div>
<div style="left:2352.64px;top:926.64px;width:5.12px;height:101.84px;background:#d3e0f4"></div>
<div style="left:2465.44px;top:926.64px;width:5.12px;height:101.84px;background:#d3e0f4"></div>
<div style="left:2579.84px;top:926.64px;width:5.12px;height:101.84px;background:#d3e0f4"></div>
<div style="left:3013.28px;top:926.64px;width:5.12px;height:101.84px;background:#d3e0f4"></div>
<div class="t" style="left:667.6px;top:926.64px;height:101.864px;line-height:111.464px;letter-spacing:0px;color:#000">Contingency</div>
<div class="t" style="left:1180px;width:511.2px;text-align:right;top:926.64px;height:101.864px;line-height:111.464px;letter-spacing:-1.6px;color:#000">$6,000,000</div>
<svg class="ic" style="left:1716px;top:938.24px;width:91.2px;height:84px" viewBox="0 0 11.40 10.50"><use href="#lockoff" width="11.40" height="10.50"/></svg>
<svg class="ic" style="left:1819.2px;top:940.64px;width:520px;height:80px" viewBox="0 0 65.00 10.00"><use href="#slider" width="65.00" height="10.00"/></svg>
<svg class="ic" style="left:2278.8px;top:941.84px;width:39.2px;height:76.8px" viewBox="0 0 4.90 9.60"><use href="#thumb" width="4.90" height="9.60"/></svg>
<svg class="ic" style="left:2376.8px;top:946.24px;width:70.4px;height:69.6px" viewBox="0 0 8.80 8.70"><use href="#gridic" width="8.80" height="8.70"/></svg>
<svg class="ic" style="left:2486.4px;top:942.64px;width:82.4px;height:76.8px" viewBox="0 0 10.30 9.60"><use href="#chartk" width="10.30" height="9.60"/></svg>
<div style="left:156.8px;top:1028.48px;width:64.8px;height:101.84px;background:#eef3fc;border-bottom:5.6px solid #c9d9f1;border-right:5.12px solid #d3e0f4;box-sizing:border-box"></div>
<div style="left:540.8px;top:1030.24px;width:2477.6px;height:100.08px;background:#a1dcda"></div>
<div style="left:1177.44px;top:1028.48px;width:5.12px;height:101.84px;background:rgba(255,255,255,.32)"></div>
<div style="left:1704.64px;top:1028.48px;width:5.12px;height:101.84px;background:rgba(255,255,255,.32)"></div>
<div style="left:2352.64px;top:1028.48px;width:5.12px;height:101.84px;background:rgba(255,255,255,.32)"></div>
<div style="left:2465.44px;top:1028.48px;width:5.12px;height:101.84px;background:rgba(255,255,255,.32)"></div>
<div style="left:2579.84px;top:1028.48px;width:5.12px;height:101.84px;background:rgba(255,255,255,.32)"></div>
<div style="left:3013.28px;top:1028.48px;width:5.12px;height:101.84px;background:rgba(255,255,255,.3)"></div>
<div class="t" style="left:560.4px;top:1028.48px;height:101.864px;line-height:111.464px;letter-spacing:0px;color:#000">Drilling</div>
<div class="t" style="left:1180px;width:511.2px;text-align:right;top:1028.48px;height:101.864px;line-height:111.464px;letter-spacing:-1.6px;color:#000">$859,500,000</div>
<svg class="ic" style="left:463.2px;top:1056.88px;width:56px;height:56px" viewBox="0 0 7.00 7.00"><use href="#exm" width="7.00" height="7.00"/></svg>
<svg class="ic" style="left:1716px;top:1040.08px;width:91.2px;height:84px" viewBox="0 0 11.40 10.50"><use href="#lockoff" width="11.40" height="10.50"/></svg>
<svg class="ic" style="left:1819.2px;top:1042.48px;width:520px;height:80px" viewBox="0 0 65.00 10.00"><use href="#slider" width="65.00" height="10.00"/></svg>
<svg class="ic" style="left:2192.4px;top:1043.68px;width:39.2px;height:76.8px" viewBox="0 0 4.90 9.60"><use href="#thumb" width="4.90" height="9.60"/></svg>
<svg class="ic" style="left:2376.8px;top:1048.08px;width:70.4px;height:69.6px" viewBox="0 0 8.80 8.70"><use href="#gridic" width="8.80" height="8.70"/></svg>
<svg class="ic" style="left:2486.4px;top:1044.48px;width:82.4px;height:76.8px" viewBox="0 0 10.30 9.60"><use href="#chartk" width="10.30" height="9.60"/></svg>
<div style="left:156.8px;top:1130.4px;width:64.8px;height:101.84px;background:#eef3fc;border-bottom:5.6px solid #c9d9f1;border-right:5.12px solid #d3e0f4;box-sizing:border-box"></div>
<div style="left:648px;top:1132.16px;width:2370.4px;height:100.08px;background:#c1a3e1"></div>
<div style="left:1177.44px;top:1130.4px;width:5.12px;height:101.84px;background:rgba(255,255,255,.32)"></div>
<div style="left:1704.64px;top:1130.4px;width:5.12px;height:101.84px;background:rgba(255,255,255,.32)"></div>
<div style="left:2352.64px;top:1130.4px;width:5.12px;height:101.84px;background:rgba(255,255,255,.32)"></div>
<div style="left:2465.44px;top:1130.4px;width:5.12px;height:101.84px;background:rgba(255,255,255,.32)"></div>
<div style="left:2579.84px;top:1130.4px;width:5.12px;height:101.84px;background:rgba(255,255,255,.32)"></div>
<div style="left:3013.28px;top:1130.4px;width:5.12px;height:101.84px;background:rgba(255,255,255,.3)"></div>
<div class="t" style="left:667.6px;top:1130.4px;height:101.864px;line-height:111.464px;letter-spacing:0px;color:#fff">Exploration</div>
<div class="t" style="left:1180px;width:511.2px;text-align:right;top:1130.4px;height:101.864px;line-height:111.464px;letter-spacing:-1.6px;color:#fff">$724,500,000</div>
<svg class="ic" style="left:570.4px;top:1158.8px;width:56px;height:56px" viewBox="0 0 7.00 7.00"><use href="#exp" width="7.00" height="7.00"/></svg>
<svg class="ic" style="left:1716px;top:1142px;width:91.2px;height:84px" viewBox="0 0 11.40 10.50"><use href="#lockoff" width="11.40" height="10.50"/></svg>
<svg class="ic" style="left:1819.2px;top:1144.4px;width:520px;height:80px" viewBox="0 0 65.00 10.00"><use href="#slider" width="65.00" height="10.00"/></svg>
<svg class="ic" style="left:2192.4px;top:1145.6px;width:39.2px;height:76.8px" viewBox="0 0 4.90 9.60"><use href="#thumb" width="4.90" height="9.60"/></svg>
<svg class="ic" style="left:2376.8px;top:1150px;width:70.4px;height:69.6px" viewBox="0 0 8.80 8.70"><use href="#gridic" width="8.80" height="8.70"/></svg>
<svg class="ic" style="left:2486.4px;top:1146.4px;width:82.4px;height:76.8px" viewBox="0 0 10.30 9.60"><use href="#chartk" width="10.30" height="9.60"/></svg>
<div style="left:156.8px;top:1232.24px;width:64.8px;height:101.84px;background:#eef3fc;border-bottom:5.6px solid #c9d9f1;border-right:5.12px solid #d3e0f4;box-sizing:border-box"></div>
<div style="left:648px;top:1234px;width:2370.4px;height:100.08px;background:#c1a3e1"></div>
<div style="left:1177.44px;top:1232.24px;width:5.12px;height:101.84px;background:rgba(255,255,255,.32)"></div>
<div style="left:1704.64px;top:1232.24px;width:5.12px;height:101.84px;background:rgba(255,255,255,.32)"></div>
<div style="left:2352.64px;top:1232.24px;width:5.12px;height:101.84px;background:rgba(255,255,255,.32)"></div>
<div style="left:2465.44px;top:1232.24px;width:5.12px;height:101.84px;background:rgba(255,255,255,.32)"></div>
<div style="left:2579.84px;top:1232.24px;width:5.12px;height:101.84px;background:rgba(255,255,255,.32)"></div>
<div style="left:3013.28px;top:1232.24px;width:5.12px;height:101.84px;background:rgba(255,255,255,.3)"></div>
<div class="t" style="left:667.6px;top:1232.24px;height:101.864px;line-height:111.464px;letter-spacing:-0.96px;color:#fff">Site Prep</div>
<div class="t" style="left:1180px;width:511.2px;text-align:right;top:1232.24px;height:101.864px;line-height:111.464px;letter-spacing:-1.6px;color:#fff">$135,000,000</div>
<svg class="ic" style="left:570.4px;top:1260.64px;width:56px;height:56px" viewBox="0 0 7.00 7.00"><use href="#exp" width="7.00" height="7.00"/></svg>
<svg class="ic" style="left:1716px;top:1243.84px;width:91.2px;height:84px" viewBox="0 0 11.40 10.50"><use href="#lockoff" width="11.40" height="10.50"/></svg>
<svg class="ic" style="left:1819.2px;top:1246.24px;width:520px;height:80px" viewBox="0 0 65.00 10.00"><use href="#slider" width="65.00" height="10.00"/></svg>
<svg class="ic" style="left:2192.4px;top:1247.44px;width:39.2px;height:76.8px" viewBox="0 0 4.90 9.60"><use href="#thumb" width="4.90" height="9.60"/></svg>
<svg class="ic" style="left:2376.8px;top:1251.84px;width:70.4px;height:69.6px" viewBox="0 0 8.80 8.70"><use href="#gridic" width="8.80" height="8.70"/></svg>
<svg class="ic" style="left:2486.4px;top:1248.24px;width:82.4px;height:76.8px" viewBox="0 0 10.30 9.60"><use href="#chartk" width="10.30" height="9.60"/></svg>
<div style="left:156.8px;top:1334.08px;width:64.8px;height:101.84px;background:#eef3fc;border-bottom:5.6px solid #c9d9f1;border-right:5.12px solid #d3e0f4;box-sizing:border-box"></div>
<div style="left:540.8px;top:1335.84px;width:2477.6px;height:100.08px;background:#a1dcda"></div>
<div style="left:1177.44px;top:1334.08px;width:5.12px;height:101.84px;background:rgba(255,255,255,.32)"></div>
<div style="left:1704.64px;top:1334.08px;width:5.12px;height:101.84px;background:rgba(255,255,255,.32)"></div>
<div style="left:2352.64px;top:1334.08px;width:5.12px;height:101.84px;background:rgba(255,255,255,.32)"></div>
<div style="left:2465.44px;top:1334.08px;width:5.12px;height:101.84px;background:rgba(255,255,255,.32)"></div>
<div style="left:2579.84px;top:1334.08px;width:5.12px;height:101.84px;background:rgba(255,255,255,.32)"></div>
<div style="left:3013.28px;top:1334.08px;width:5.12px;height:101.84px;background:rgba(255,255,255,.3)"></div>
<div class="t" style="left:560.4px;top:1334.08px;height:101.864px;line-height:111.464px;letter-spacing:0px;color:#000">G&amp;A</div>
<div class="t" style="left:1180px;width:511.2px;text-align:right;top:1334.08px;height:101.864px;line-height:111.464px;letter-spacing:-1.6px;color:#000">$31,500,000</div>
<div class="t" style="left:2600.8px;top:1334.08px;height:101.864px;line-height:111.464px;white-space:pre;letter-spacing:-0.64px">Initial  Plan.0070</div>
<svg class="ic" style="left:463.2px;top:1362.48px;width:56px;height:56px" viewBox="0 0 7.00 7.00"><use href="#exm" width="7.00" height="7.00"/></svg>
<svg class="ic" style="left:1716.8px;top:1344.88px;width:88.8px;height:87.2px" viewBox="0 0 11.10 10.90"><use href="#lockon" width="11.10" height="10.90"/></svg>
<svg class="ic" style="left:1819.2px;top:1348.08px;width:520px;height:80px" viewBox="0 0 65.00 10.00"><use href="#slider" width="65.00" height="10.00"/></svg>
<svg class="ic" style="left:2278.8px;top:1349.28px;width:39.2px;height:76.8px" viewBox="0 0 4.90 9.60"><use href="#thumb" width="4.90" height="9.60"/></svg>
<svg class="ic" style="left:2376.8px;top:1353.68px;width:70.4px;height:69.6px" viewBox="0 0 8.80 8.70"><use href="#gridic" width="8.80" height="8.70"/></svg>
<svg class="ic" style="left:2486.4px;top:1350.08px;width:82.4px;height:76.8px" viewBox="0 0 10.30 9.60"><use href="#chartc" width="10.30" height="9.60"/></svg>
<div style="left:156.8px;top:1436px;width:64.8px;height:101.84px;background:#eef3fc;border-bottom:5.6px solid #c9d9f1;border-right:5.12px solid #d3e0f4;box-sizing:border-box"></div>
<div style="left:648px;top:1436px;width:532px;height:101.84px;border-left:5.12px solid #d3e0f4;border-bottom:5.12px solid #d3e0f4;box-sizing:border-box"></div>
<div style="left:1180px;top:1436px;width:1838.4px;height:101.84px;border-bottom:5.12px solid #d3e0f4;box-sizing:border-box"></div>
<div style="left:1177.44px;top:1436px;width:5.12px;height:101.84px;background:#d3e0f4"></div>
<div style="left:1704.64px;top:1436px;width:5.12px;height:101.84px;background:#d3e0f4"></div>
<div style="left:2352.64px;top:1436px;width:5.12px;height:101.84px;background:#d3e0f4"></div>
<div style="left:2465.44px;top:1436px;width:5.12px;height:101.84px;background:#d3e0f4"></div>
<div style="left:2579.84px;top:1436px;width:5.12px;height:101.84px;background:#d3e0f4"></div>
<div style="left:3013.28px;top:1436px;width:5.12px;height:101.84px;background:#d3e0f4"></div>
<div class="t" style="left:667.6px;top:1436px;height:101.864px;line-height:111.464px;letter-spacing:0px;color:#000">Travel</div>
<div class="t" style="left:1180px;width:511.2px;text-align:right;top:1436px;height:101.864px;line-height:111.464px;letter-spacing:-1.6px;color:#000">$700,000</div>
<div class="t" style="left:2600.8px;top:1436px;height:101.864px;line-height:111.464px;white-space:pre;letter-spacing:-0.64px">Initial  Plan.0070</div>
<svg class="ic" style="left:1716px;top:1447.6px;width:91.2px;height:84px" viewBox="0 0 11.40 10.50"><use href="#lockoff" width="11.40" height="10.50"/></svg>
<svg class="ic" style="left:1819.2px;top:1450px;width:520px;height:80px" viewBox="0 0 65.00 10.00"><use href="#slider" width="65.00" height="10.00"/></svg>
<svg class="ic" style="left:2278.8px;top:1451.2px;width:39.2px;height:76.8px" viewBox="0 0 4.90 9.60"><use href="#thumb" width="4.90" height="9.60"/></svg>
<svg class="ic" style="left:2376.8px;top:1455.6px;width:70.4px;height:69.6px" viewBox="0 0 8.80 8.70"><use href="#gridic" width="8.80" height="8.70"/></svg>
<svg class="ic" style="left:2486.4px;top:1452px;width:82.4px;height:76.8px" viewBox="0 0 10.30 9.60"><use href="#chartc" width="10.30" height="9.60"/></svg>
<div style="left:156.8px;top:1537.84px;width:64.8px;height:101.84px;background:#eef3fc;border-bottom:5.6px solid #c9d9f1;border-right:5.12px solid #d3e0f4;box-sizing:border-box"></div>
<div style="left:648px;top:1537.84px;width:532px;height:101.84px;border-left:5.12px solid #d3e0f4;border-bottom:5.12px solid #d3e0f4;box-sizing:border-box"></div>
<div style="left:1180px;top:1537.84px;width:1838.4px;height:101.84px;border-bottom:5.12px solid #d3e0f4;box-sizing:border-box"></div>
<div style="left:1177.44px;top:1537.84px;width:5.12px;height:101.84px;background:#d3e0f4"></div>
<div style="left:1704.64px;top:1537.84px;width:5.12px;height:101.84px;background:#d3e0f4"></div>
<div style="left:2352.64px;top:1537.84px;width:5.12px;height:101.84px;background:#d3e0f4"></div>
<div style="left:2465.44px;top:1537.84px;width:5.12px;height:101.84px;background:#d3e0f4"></div>
<div style="left:2579.84px;top:1537.84px;width:5.12px;height:101.84px;background:#d3e0f4"></div>
<div style="left:3013.28px;top:1537.84px;width:5.12px;height:101.84px;background:#d3e0f4"></div>
<div class="t" style="left:667.6px;top:1537.84px;height:101.864px;line-height:111.464px;letter-spacing:-1.2px;color:#000">Risk Analysis</div>
<div class="t" style="left:1180px;width:511.2px;text-align:right;top:1537.84px;height:101.864px;line-height:111.464px;letter-spacing:-1.6px;color:#000">$1,400,000</div>
<div class="t" style="left:2600.8px;top:1537.84px;height:101.864px;line-height:111.464px;white-space:pre;letter-spacing:-0.64px">Initial  Plan.0070</div>
<svg class="ic" style="left:1716px;top:1549.44px;width:91.2px;height:84px" viewBox="0 0 11.40 10.50"><use href="#lockoff" width="11.40" height="10.50"/></svg>
<svg class="ic" style="left:1819.2px;top:1551.84px;width:520px;height:80px" viewBox="0 0 65.00 10.00"><use href="#slider" width="65.00" height="10.00"/></svg>
<svg class="ic" style="left:2278.8px;top:1553.04px;width:39.2px;height:76.8px" viewBox="0 0 4.90 9.60"><use href="#thumb" width="4.90" height="9.60"/></svg>
<svg class="ic" style="left:2376.8px;top:1557.44px;width:70.4px;height:69.6px" viewBox="0 0 8.80 8.70"><use href="#gridic" width="8.80" height="8.70"/></svg>
<svg class="ic" style="left:2486.4px;top:1553.84px;width:82.4px;height:76.8px" viewBox="0 0 10.30 9.60"><use href="#chartc" width="10.30" height="9.60"/></svg>
<div style="left:156.8px;top:1639.68px;width:64.8px;height:101.84px;background:#eef3fc;border-bottom:5.6px solid #c9d9f1;border-right:5.12px solid #d3e0f4;box-sizing:border-box"></div>
<div style="left:648px;top:1639.68px;width:532px;height:101.84px;border-left:5.12px solid #d3e0f4;border-bottom:5.12px solid #d3e0f4;box-sizing:border-box"></div>
<div style="left:1180px;top:1639.68px;width:1838.4px;height:101.84px;border-bottom:5.12px solid #d3e0f4;box-sizing:border-box"></div>
<div style="left:1177.44px;top:1639.68px;width:5.12px;height:101.84px;background:#d3e0f4"></div>
<div style="left:1704.64px;top:1639.68px;width:5.12px;height:101.84px;background:#d3e0f4"></div>
<div style="left:2352.64px;top:1639.68px;width:5.12px;height:101.84px;background:#d3e0f4"></div>
<div style="left:2465.44px;top:1639.68px;width:5.12px;height:101.84px;background:#d3e0f4"></div>
<div style="left:2579.84px;top:1639.68px;width:5.12px;height:101.84px;background:#d3e0f4"></div>
<div style="left:3013.28px;top:1639.68px;width:5.12px;height:101.84px;background:#d3e0f4"></div>
<div class="t" style="left:667.6px;top:1639.68px;height:101.864px;line-height:111.464px;letter-spacing:0px;color:#000">Support</div>
<div class="t" style="left:1180px;width:511.2px;text-align:right;top:1639.68px;height:101.864px;line-height:111.464px;letter-spacing:-1.6px;color:#000">$2,450,000</div>
<div class="t" style="left:2600.8px;top:1639.68px;height:101.864px;line-height:111.464px;white-space:pre;letter-spacing:-0.64px">Initial  Plan.0070</div>
<svg class="ic" style="left:1716px;top:1651.28px;width:91.2px;height:84px" viewBox="0 0 11.40 10.50"><use href="#lockoff" width="11.40" height="10.50"/></svg>
<svg class="ic" style="left:1819.2px;top:1653.68px;width:520px;height:80px" viewBox="0 0 65.00 10.00"><use href="#slider" width="65.00" height="10.00"/></svg>
<svg class="ic" style="left:2278.8px;top:1654.88px;width:39.2px;height:76.8px" viewBox="0 0 4.90 9.60"><use href="#thumb" width="4.90" height="9.60"/></svg>
<svg class="ic" style="left:2376.8px;top:1659.28px;width:70.4px;height:69.6px" viewBox="0 0 8.80 8.70"><use href="#gridic" width="8.80" height="8.70"/></svg>
<svg class="ic" style="left:2486.4px;top:1655.68px;width:82.4px;height:76.8px" viewBox="0 0 10.30 9.60"><use href="#chartc" width="10.30" height="9.60"/></svg>
<div style="left:156.8px;top:1741.52px;width:64.8px;height:101.84px;background:#eef3fc;border-bottom:5.6px solid #c9d9f1;border-right:5.12px solid #d3e0f4;box-sizing:border-box"></div>
<div style="left:648px;top:1741.52px;width:532px;height:101.84px;border-left:5.12px solid #d3e0f4;border-bottom:5.12px solid #d3e0f4;box-sizing:border-box"></div>
<div style="left:1180px;top:1741.52px;width:1838.4px;height:101.84px;border-bottom:5.12px solid #d3e0f4;box-sizing:border-box"></div>
<div style="left:1177.44px;top:1741.52px;width:5.12px;height:101.84px;background:#d3e0f4"></div>
<div style="left:1704.64px;top:1741.52px;width:5.12px;height:101.84px;background:#d3e0f4"></div>
<div style="left:2352.64px;top:1741.52px;width:5.12px;height:101.84px;background:#d3e0f4"></div>
<div style="left:2465.44px;top:1741.52px;width:5.12px;height:101.84px;background:#d3e0f4"></div>
<div style="left:2579.84px;top:1741.52px;width:5.12px;height:101.84px;background:#d3e0f4"></div>
<div style="left:3013.28px;top:1741.52px;width:5.12px;height:101.84px;background:#d3e0f4"></div>
<div class="t" style="left:667.6px;top:1741.52px;height:101.864px;line-height:111.464px;letter-spacing:0px;color:#000">G&amp;A</div>
<div class="t" style="left:1180px;width:511.2px;text-align:right;top:1741.52px;height:101.864px;line-height:111.464px;letter-spacing:-1.6px;color:#000">$21,000,000</div>
<div class="t" style="left:2600.8px;top:1741.52px;height:101.864px;line-height:111.464px;white-space:pre;letter-spacing:-0.64px">Initial  Plan.0070</div>
<svg class="ic" style="left:1716px;top:1753.12px;width:91.2px;height:84px" viewBox="0 0 11.40 10.50"><use href="#lockoff" width="11.40" height="10.50"/></svg>
<svg class="ic" style="left:1819.2px;top:1755.52px;width:520px;height:80px" viewBox="0 0 65.00 10.00"><use href="#slider" width="65.00" height="10.00"/></svg>
<svg class="ic" style="left:2278.8px;top:1756.72px;width:39.2px;height:76.8px" viewBox="0 0 4.90 9.60"><use href="#thumb" width="4.90" height="9.60"/></svg>
<svg class="ic" style="left:2376.8px;top:1761.12px;width:70.4px;height:69.6px" viewBox="0 0 8.80 8.70"><use href="#gridic" width="8.80" height="8.70"/></svg>
<svg class="ic" style="left:2486.4px;top:1757.52px;width:82.4px;height:76.8px" viewBox="0 0 10.30 9.60"><use href="#chartc" width="10.30" height="9.60"/></svg>
<div style="left:156.8px;top:1843.44px;width:64.8px;height:101.84px;background:#eef3fc;border-bottom:5.6px solid #c9d9f1;border-right:5.12px solid #d3e0f4;box-sizing:border-box"></div>
<div style="left:648px;top:1843.44px;width:532px;height:101.84px;border-left:5.12px solid #d3e0f4;border-bottom:5.12px solid #d3e0f4;box-sizing:border-box"></div>
<div style="left:1180px;top:1843.44px;width:1838.4px;height:101.84px;border-bottom:5.12px solid #d3e0f4;box-sizing:border-box"></div>
<div style="left:1177.44px;top:1843.44px;width:5.12px;height:101.84px;background:#d3e0f4"></div>
<div style="left:1704.64px;top:1843.44px;width:5.12px;height:101.84px;background:#d3e0f4"></div>
<div style="left:2352.64px;top:1843.44px;width:5.12px;height:101.84px;background:#d3e0f4"></div>
<div style="left:2465.44px;top:1843.44px;width:5.12px;height:101.84px;background:#d3e0f4"></div>
<div style="left:2579.84px;top:1843.44px;width:5.12px;height:101.84px;background:#d3e0f4"></div>
<div style="left:3013.28px;top:1843.44px;width:5.12px;height:101.84px;background:#d3e0f4"></div>
<div class="t" style="left:667.6px;top:1843.44px;height:101.864px;line-height:111.464px;letter-spacing:0px;color:#000">Contractors</div>
<div class="t" style="left:1180px;width:511.2px;text-align:right;top:1843.44px;height:101.864px;line-height:111.464px;letter-spacing:-1.6px;color:#000">$5,950,000</div>
<div class="t" style="left:2600.8px;top:1843.44px;height:101.864px;line-height:111.464px;white-space:pre;letter-spacing:-0.64px">Initial  Plan.0070</div>
<svg class="ic" style="left:1716px;top:1855.04px;width:91.2px;height:84px" viewBox="0 0 11.40 10.50"><use href="#lockoff" width="11.40" height="10.50"/></svg>
<svg class="ic" style="left:1819.2px;top:1857.44px;width:520px;height:80px" viewBox="0 0 65.00 10.00"><use href="#slider" width="65.00" height="10.00"/></svg>
<svg class="ic" style="left:2278.8px;top:1858.64px;width:39.2px;height:76.8px" viewBox="0 0 4.90 9.60"><use href="#thumb" width="4.90" height="9.60"/></svg>
<svg class="ic" style="left:2376.8px;top:1863.04px;width:70.4px;height:69.6px" viewBox="0 0 8.80 8.70"><use href="#gridic" width="8.80" height="8.70"/></svg>
<svg class="ic" style="left:2486.4px;top:1859.44px;width:82.4px;height:76.8px" viewBox="0 0 10.30 9.60"><use href="#chartc" width="10.30" height="9.60"/></svg>
<div style="left:156.8px;top:1945.28px;width:64.8px;height:101.84px;background:#eef3fc;border-bottom:5.6px solid #c9d9f1;border-right:5.12px solid #d3e0f4;box-sizing:border-box"></div>
<div style="left:540.8px;top:1947.04px;width:2477.6px;height:100.08px;background:#a1dcda"></div>
<div style="left:1177.44px;top:1945.28px;width:5.12px;height:101.84px;background:rgba(255,255,255,.32)"></div>
<div style="left:1704.64px;top:1945.28px;width:5.12px;height:101.84px;background:rgba(255,255,255,.32)"></div>
<div style="left:2352.64px;top:1945.28px;width:5.12px;height:101.84px;background:rgba(255,255,255,.32)"></div>
<div style="left:2465.44px;top:1945.28px;width:5.12px;height:101.84px;background:rgba(255,255,255,.32)"></div>
<div style="left:2579.84px;top:1945.28px;width:5.12px;height:101.84px;background:rgba(255,255,255,.32)"></div>
<div style="left:3013.28px;top:1945.28px;width:5.12px;height:101.84px;background:rgba(255,255,255,.3)"></div>
<div class="t" style="left:560.4px;top:1945.28px;height:101.864px;line-height:111.464px;letter-spacing:0px;color:#000">Platform</div>
<div class="t" style="left:1180px;width:511.2px;text-align:right;top:1945.28px;height:101.864px;line-height:111.464px;letter-spacing:-1.6px;color:#000">$212,400,000</div>
<svg class="ic" style="left:463.2px;top:1973.68px;width:56px;height:56px" viewBox="0 0 7.00 7.00"><use href="#exm" width="7.00" height="7.00"/></svg>
<svg class="ic" style="left:1716px;top:1956.88px;width:91.2px;height:84px" viewBox="0 0 11.40 10.50"><use href="#lockoff" width="11.40" height="10.50"/></svg>
<svg class="ic" style="left:1819.2px;top:1959.28px;width:520px;height:80px" viewBox="0 0 65.00 10.00"><use href="#slider" width="65.00" height="10.00"/></svg>
<svg class="ic" style="left:2192.4px;top:1960.48px;width:39.2px;height:76.8px" viewBox="0 0 4.90 9.60"><use href="#thumb" width="4.90" height="9.60"/></svg>
<svg class="ic" style="left:2376.8px;top:1964.88px;width:70.4px;height:69.6px" viewBox="0 0 8.80 8.70"><use href="#gridic" width="8.80" height="8.70"/></svg>
<svg class="ic" style="left:2486.4px;top:1961.28px;width:82.4px;height:76.8px" viewBox="0 0 10.30 9.60"><use href="#chartk" width="10.30" height="9.60"/></svg>
<div style="left:156.8px;top:2047.12px;width:64.8px;height:101.84px;background:#eef3fc;border-bottom:5.6px solid #c9d9f1;border-right:5.12px solid #d3e0f4;box-sizing:border-box"></div>
<div style="left:648px;top:2047.12px;width:532px;height:101.84px;border-left:5.12px solid #d3e0f4;border-bottom:5.12px solid #d3e0f4;box-sizing:border-box"></div>
<div style="left:1180px;top:2047.12px;width:1838.4px;height:101.84px;border-bottom:5.12px solid #d3e0f4;box-sizing:border-box"></div>
<div style="left:1177.44px;top:2047.12px;width:5.12px;height:101.84px;background:#d3e0f4"></div>
<div style="left:1704.64px;top:2047.12px;width:5.12px;height:101.84px;background:#d3e0f4"></div>
<div style="left:2352.64px;top:2047.12px;width:5.12px;height:101.84px;background:#d3e0f4"></div>
<div style="left:2465.44px;top:2047.12px;width:5.12px;height:101.84px;background:#d3e0f4"></div>
<div style="left:2579.84px;top:2047.12px;width:5.12px;height:101.84px;background:#d3e0f4"></div>
<div style="left:3013.28px;top:2047.12px;width:5.12px;height:101.84px;background:#d3e0f4"></div>
<div class="t" style="left:667.6px;top:2047.12px;height:101.864px;line-height:111.464px;letter-spacing:0px;color:#000">Transportation</div>
<div class="t" style="left:1180px;width:511.2px;text-align:right;top:2047.12px;height:101.864px;line-height:111.464px;letter-spacing:-1.6px;color:#000">$59,000,000</div>
<svg class="ic" style="left:1716px;top:2058.72px;width:91.2px;height:84px" viewBox="0 0 11.40 10.50"><use href="#lockoff" width="11.40" height="10.50"/></svg>
<svg class="ic" style="left:1819.2px;top:2061.12px;width:520px;height:80px" viewBox="0 0 65.00 10.00"><use href="#slider" width="65.00" height="10.00"/></svg>
<svg class="ic" style="left:2192.4px;top:2062.32px;width:39.2px;height:76.8px" viewBox="0 0 4.90 9.60"><use href="#thumb" width="4.90" height="9.60"/></svg>
<svg class="ic" style="left:2376.8px;top:2066.72px;width:70.4px;height:69.6px" viewBox="0 0 8.80 8.70"><use href="#gridic" width="8.80" height="8.70"/></svg>
<svg class="ic" style="left:2486.4px;top:2063.12px;width:82.4px;height:76.8px" viewBox="0 0 10.30 9.60"><use href="#chartk" width="10.30" height="9.60"/></svg>
<div style="left:156.8px;top:2149.04px;width:64.8px;height:101.84px;background:#eef3fc;border-bottom:5.6px solid #c9d9f1;border-right:5.12px solid #d3e0f4;box-sizing:border-box"></div>
<div style="left:648px;top:2149.04px;width:532px;height:101.84px;border-left:5.12px solid #d3e0f4;border-bottom:5.12px solid #d3e0f4;box-sizing:border-box"></div>
<div style="left:1180px;top:2149.04px;width:1838.4px;height:101.84px;border-bottom:5.12px solid #d3e0f4;box-sizing:border-box"></div>
<div style="left:1177.44px;top:2149.04px;width:5.12px;height:101.84px;background:#d3e0f4"></div>
<div style="left:1704.64px;top:2149.04px;width:5.12px;height:101.84px;background:#d3e0f4"></div>
<div style="left:2352.64px;top:2149.04px;width:5.12px;height:101.84px;background:#d3e0f4"></div>
<div style="left:2465.44px;top:2149.04px;width:5.12px;height:101.84px;background:#d3e0f4"></div>
<div style="left:2579.84px;top:2149.04px;width:5.12px;height:101.84px;background:#d3e0f4"></div>
<div style="left:3013.28px;top:2149.04px;width:5.12px;height:101.84px;background:#d3e0f4"></div>
<div class="t" style="left:667.6px;top:2149.04px;height:101.864px;line-height:111.464px;letter-spacing:0px;color:#000">Guard Vessel</div>
<div class="t" style="left:1180px;width:511.2px;text-align:right;top:2149.04px;height:101.864px;line-height:111.464px;letter-spacing:-1.6px;color:#000">$11,800,000</div>
<svg class="ic" style="left:1716px;top:2160.64px;width:91.2px;height:84px" viewBox="0 0 11.40 10.50"><use href="#lockoff" width="11.40" height="10.50"/></svg>
<svg class="ic" style="left:1819.2px;top:2163.04px;width:520px;height:80px" viewBox="0 0 65.00 10.00"><use href="#slider" width="65.00" height="10.00"/></svg>
<svg class="ic" style="left:2192.4px;top:2164.24px;width:39.2px;height:76.8px" viewBox="0 0 4.90 9.60"><use href="#thumb" width="4.90" height="9.60"/></svg>
<svg class="ic" style="left:2376.8px;top:2168.64px;width:70.4px;height:69.6px" viewBox="0 0 8.80 8.70"><use href="#gridic" width="8.80" height="8.70"/></svg>
<svg class="ic" style="left:2486.4px;top:2165.04px;width:82.4px;height:76.8px" viewBox="0 0 10.30 9.60"><use href="#chartk" width="10.30" height="9.60"/></svg>
<div style="left:156.8px;top:2250.88px;width:64.8px;height:101.84px;background:#eef3fc;border-bottom:5.6px solid #c9d9f1;border-right:5.12px solid #d3e0f4;box-sizing:border-box"></div>
<div style="left:648px;top:2250.88px;width:532px;height:101.84px;border-left:5.12px solid #d3e0f4;border-bottom:5.12px solid #d3e0f4;box-sizing:border-box"></div>
<div style="left:1180px;top:2250.88px;width:1838.4px;height:101.84px;border-bottom:5.12px solid #d3e0f4;box-sizing:border-box"></div>
<div style="left:1177.44px;top:2250.88px;width:5.12px;height:101.84px;background:#d3e0f4"></div>
<div style="left:1704.64px;top:2250.88px;width:5.12px;height:101.84px;background:#d3e0f4"></div>
<div style="left:2352.64px;top:2250.88px;width:5.12px;height:101.84px;background:#d3e0f4"></div>
<div style="left:2465.44px;top:2250.88px;width:5.12px;height:101.84px;background:#d3e0f4"></div>
<div style="left:2579.84px;top:2250.88px;width:5.12px;height:101.84px;background:#d3e0f4"></div>
<div style="left:3013.28px;top:2250.88px;width:5.12px;height:101.84px;background:#d3e0f4"></div>
<div class="t" style="left:667.6px;top:2250.88px;height:101.864px;line-height:111.464px;letter-spacing:0px;color:#000">Risers &amp; Comms</div>
<div class="t" style="left:1180px;width:511.2px;text-align:right;top:2250.88px;height:101.864px;line-height:111.464px;letter-spacing:-1.6px;color:#000">$47,200,000</div>
<svg class="ic" style="left:1716px;top:2262.48px;width:91.2px;height:84px" viewBox="0 0 11.40 10.50"><use href="#lockoff" width="11.40" height="10.50"/></svg>
<svg class="ic" style="left:1819.2px;top:2264.88px;width:520px;height:80px" viewBox="0 0 65.00 10.00"><use href="#slider" width="65.00" height="10.00"/></svg>
<svg class="ic" style="left:2192.4px;top:2266.08px;width:39.2px;height:76.8px" viewBox="0 0 4.90 9.60"><use href="#thumb" width="4.90" height="9.60"/></svg>
<svg class="ic" style="left:2376.8px;top:2270.48px;width:70.4px;height:69.6px" viewBox="0 0 8.80 8.70"><use href="#gridic" width="8.80" height="8.70"/></svg>
<svg class="ic" style="left:2486.4px;top:2266.88px;width:82.4px;height:76.8px" viewBox="0 0 10.30 9.60"><use href="#chartk" width="10.30" height="9.60"/></svg>
<div style="left:156.8px;top:2352.72px;width:64.8px;height:101.84px;background:#eef3fc;border-bottom:5.6px solid #c9d9f1;border-right:5.12px solid #d3e0f4;box-sizing:border-box"></div>
<div style="left:648px;top:2352.72px;width:532px;height:101.84px;border-left:5.12px solid #d3e0f4;border-bottom:5.12px solid #d3e0f4;box-sizing:border-box"></div>
<div style="left:1180px;top:2352.72px;width:1838.4px;height:101.84px;border-bottom:5.12px solid #d3e0f4;box-sizing:border-box"></div>
<div style="left:1177.44px;top:2352.72px;width:5.12px;height:101.84px;background:#d3e0f4"></div>
<div style="left:1704.64px;top:2352.72px;width:5.12px;height:101.84px;background:#d3e0f4"></div>
<div style="left:2352.64px;top:2352.72px;width:5.12px;height:101.84px;background:#d3e0f4"></div>
<div style="left:2465.44px;top:2352.72px;width:5.12px;height:101.84px;background:#d3e0f4"></div>
<div style="left:2579.84px;top:2352.72px;width:5.12px;height:101.84px;background:#d3e0f4"></div>
<div style="left:3013.28px;top:2352.72px;width:5.12px;height:101.84px;background:#d3e0f4"></div>
<div class="t" style="left:667.6px;top:2352.72px;height:101.864px;line-height:111.464px;letter-spacing:0px;color:#000">Mobilization</div>
<div class="t" style="left:1180px;width:511.2px;text-align:right;top:2352.72px;height:101.864px;line-height:111.464px;letter-spacing:-1.6px;color:#000">$47,200,000</div>
<svg class="ic" style="left:1716px;top:2364.32px;width:91.2px;height:84px" viewBox="0 0 11.40 10.50"><use href="#lockoff" width="11.40" height="10.50"/></svg>
<svg class="ic" style="left:1819.2px;top:2366.72px;width:520px;height:80px" viewBox="0 0 65.00 10.00"><use href="#slider" width="65.00" height="10.00"/></svg>
<svg class="ic" style="left:2192.4px;top:2367.92px;width:39.2px;height:76.8px" viewBox="0 0 4.90 9.60"><use href="#thumb" width="4.90" height="9.60"/></svg>
<svg class="ic" style="left:2376.8px;top:2372.32px;width:70.4px;height:69.6px" viewBox="0 0 8.80 8.70"><use href="#gridic" width="8.80" height="8.70"/></svg>
<svg class="ic" style="left:2486.4px;top:2368.72px;width:82.4px;height:76.8px" viewBox="0 0 10.30 9.60"><use href="#chartk" width="10.30" height="9.60"/></svg>
<div style="left:156.8px;top:2454.64px;width:64.8px;height:101.84px;background:#eef3fc;border-bottom:5.6px solid #c9d9f1;border-right:5.12px solid #d3e0f4;box-sizing:border-box"></div>
<div style="left:648px;top:2454.64px;width:532px;height:101.84px;border-left:5.12px solid #d3e0f4;border-bottom:5.12px solid #d3e0f4;box-sizing:border-box"></div>
<div style="left:1180px;top:2454.64px;width:1838.4px;height:101.84px;border-bottom:5.12px solid #d3e0f4;box-sizing:border-box"></div>
<div style="left:1177.44px;top:2454.64px;width:5.12px;height:101.84px;background:#d3e0f4"></div>
<div style="left:1704.64px;top:2454.64px;width:5.12px;height:101.84px;background:#d3e0f4"></div>
<div style="left:2352.64px;top:2454.64px;width:5.12px;height:101.84px;background:#d3e0f4"></div>
<div style="left:2465.44px;top:2454.64px;width:5.12px;height:101.84px;background:#d3e0f4"></div>
<div style="left:2579.84px;top:2454.64px;width:5.12px;height:101.84px;background:#d3e0f4"></div>
<div style="left:3013.28px;top:2454.64px;width:5.12px;height:101.84px;background:#d3e0f4"></div>
<div class="t" style="left:667.6px;top:2454.64px;height:101.864px;line-height:111.464px;letter-spacing:0px;color:#000">Mooring</div>
<div class="t" style="left:1180px;width:511.2px;text-align:right;top:2454.64px;height:101.864px;line-height:111.464px;letter-spacing:-1.6px;color:#000">$5,900,000</div>
<svg class="ic" style="left:1716px;top:2466.24px;width:91.2px;height:84px" viewBox="0 0 11.40 10.50"><use href="#lockoff" width="11.40" height="10.50"/></svg>
<svg class="ic" style="left:1819.2px;top:2468.64px;width:520px;height:80px" viewBox="0 0 65.00 10.00"><use href="#slider" width="65.00" height="10.00"/></svg>
<svg class="ic" style="left:2192.4px;top:2469.84px;width:39.2px;height:76.8px" viewBox="0 0 4.90 9.60"><use href="#thumb" width="4.90" height="9.60"/></svg>
<svg class="ic" style="left:2376.8px;top:2474.24px;width:70.4px;height:69.6px" viewBox="0 0 8.80 8.70"><use href="#gridic" width="8.80" height="8.70"/></svg>
<svg class="ic" style="left:2486.4px;top:2470.64px;width:82.4px;height:76.8px" viewBox="0 0 10.30 9.60"><use href="#chartk" width="10.30" height="9.60"/></svg>
<div style="left:156.8px;top:2556.48px;width:64.8px;height:101.84px;background:#eef3fc;border-bottom:5.6px solid #c9d9f1;border-right:5.12px solid #d3e0f4;box-sizing:border-box"></div>
<div style="left:648px;top:2556.48px;width:532px;height:101.84px;border-left:5.12px solid #d3e0f4;border-bottom:5.12px solid #d3e0f4;box-sizing:border-box"></div>
<div style="left:1180px;top:2556.48px;width:1838.4px;height:101.84px;border-bottom:5.12px solid #d3e0f4;box-sizing:border-box"></div>
<div style="left:1177.44px;top:2556.48px;width:5.12px;height:101.84px;background:#d3e0f4"></div>
<div style="left:1704.64px;top:2556.48px;width:5.12px;height:101.84px;background:#d3e0f4"></div>
<div style="left:2352.64px;top:2556.48px;width:5.12px;height:101.84px;background:#d3e0f4"></div>
<div style="left:2465.44px;top:2556.48px;width:5.12px;height:101.84px;background:#d3e0f4"></div>
<div style="left:2579.84px;top:2556.48px;width:5.12px;height:101.84px;background:#d3e0f4"></div>
<div style="left:3013.28px;top:2556.48px;width:5.12px;height:101.84px;background:#d3e0f4"></div>
<div class="t" style="left:667.6px;top:2556.48px;height:101.864px;line-height:111.464px;letter-spacing:0px;color:#000">Decking</div>
<div class="t" style="left:1180px;width:511.2px;text-align:right;top:2556.48px;height:101.864px;line-height:111.464px;letter-spacing:-1.6px;color:#000">$8,850,000</div>
<svg class="ic" style="left:1716px;top:2568.08px;width:91.2px;height:84px" viewBox="0 0 11.40 10.50"><use href="#lockoff" width="11.40" height="10.50"/></svg>
<svg class="ic" style="left:1819.2px;top:2570.48px;width:520px;height:80px" viewBox="0 0 65.00 10.00"><use href="#slider" width="65.00" height="10.00"/></svg>
<svg class="ic" style="left:2192.4px;top:2571.68px;width:39.2px;height:76.8px" viewBox="0 0 4.90 9.60"><use href="#thumb" width="4.90" height="9.60"/></svg>
<svg class="ic" style="left:2376.8px;top:2576.08px;width:70.4px;height:69.6px" viewBox="0 0 8.80 8.70"><use href="#gridic" width="8.80" height="8.70"/></svg>
<svg class="ic" style="left:2486.4px;top:2572.48px;width:82.4px;height:76.8px" viewBox="0 0 10.30 9.60"><use href="#chartk" width="10.30" height="9.60"/></svg>
<div style="left:156.8px;top:2658.32px;width:64.8px;height:101.84px;background:#eef3fc;border-bottom:5.6px solid #c9d9f1;border-right:5.12px solid #d3e0f4;box-sizing:border-box"></div>
<div style="left:648px;top:2658.32px;width:532px;height:101.84px;border-left:5.12px solid #d3e0f4;border-bottom:5.12px solid #d3e0f4;box-sizing:border-box"></div>
<div style="left:1180px;top:2658.32px;width:1838.4px;height:101.84px;border-bottom:5.12px solid #d3e0f4;box-sizing:border-box"></div>
<div style="left:1177.44px;top:2658.32px;width:5.12px;height:101.84px;background:#d3e0f4"></div>
<div style="left:1704.64px;top:2658.32px;width:5.12px;height:101.84px;background:#d3e0f4"></div>
<div style="left:2352.64px;top:2658.32px;width:5.12px;height:101.84px;background:#d3e0f4"></div>
<div style="left:2465.44px;top:2658.32px;width:5.12px;height:101.84px;background:#d3e0f4"></div>
<div style="left:2579.84px;top:2658.32px;width:5.12px;height:101.84px;background:#d3e0f4"></div>
<div style="left:3013.28px;top:2658.32px;width:5.12px;height:101.84px;background:#d3e0f4"></div>
<div class="t" style="left:667.6px;top:2658.32px;height:101.864px;line-height:111.464px;letter-spacing:0px;color:#000">Install</div>
<div class="t" style="left:1180px;width:511.2px;text-align:right;top:2658.32px;height:101.864px;line-height:111.464px;letter-spacing:-1.6px;color:#000">$17,700,000</div>
<svg class="ic" style="left:1716px;top:2669.92px;width:91.2px;height:84px" viewBox="0 0 11.40 10.50"><use href="#lockoff" width="11.40" height="10.50"/></svg>
<svg class="ic" style="left:1819.2px;top:2672.32px;width:520px;height:80px" viewBox="0 0 65.00 10.00"><use href="#slider" width="65.00" height="10.00"/></svg>
<svg class="ic" style="left:2192.4px;top:2673.52px;width:39.2px;height:76.8px" viewBox="0 0 4.90 9.60"><use href="#thumb" width="4.90" height="9.60"/></svg>
<svg class="ic" style="left:2376.8px;top:2677.92px;width:70.4px;height:69.6px" viewBox="0 0 8.80 8.70"><use href="#gridic" width="8.80" height="8.70"/></svg>
<svg class="ic" style="left:2486.4px;top:2674.32px;width:82.4px;height:76.8px" viewBox="0 0 10.30 9.60"><use href="#chartk" width="10.30" height="9.60"/></svg>
<div style="left:156.8px;top:2760.16px;width:64.8px;height:101.84px;background:#eef3fc;border-bottom:5.6px solid #c9d9f1;border-right:5.12px solid #d3e0f4;box-sizing:border-box"></div>
<div style="left:648px;top:2760.16px;width:532px;height:101.84px;border-left:5.12px solid #d3e0f4;border-bottom:5.12px solid #d3e0f4;box-sizing:border-box"></div>
<div style="left:1180px;top:2760.16px;width:1838.4px;height:101.84px;border-bottom:5.12px solid #d3e0f4;box-sizing:border-box"></div>
<div style="left:1177.44px;top:2760.16px;width:5.12px;height:101.84px;background:#d3e0f4"></div>
<div style="left:1704.64px;top:2760.16px;width:5.12px;height:101.84px;background:#d3e0f4"></div>
<div style="left:2352.64px;top:2760.16px;width:5.12px;height:101.84px;background:#d3e0f4"></div>
<div style="left:2465.44px;top:2760.16px;width:5.12px;height:101.84px;background:#d3e0f4"></div>
<div style="left:2579.84px;top:2760.16px;width:5.12px;height:101.84px;background:#d3e0f4"></div>
<div style="left:3013.28px;top:2760.16px;width:5.12px;height:101.84px;background:#d3e0f4"></div>
<div class="t" style="left:667.6px;top:2760.16px;height:101.864px;line-height:111.464px;letter-spacing:0px;color:#000">Mooring</div>
<div class="t" style="left:1180px;width:511.2px;text-align:right;top:2760.16px;height:101.864px;line-height:111.464px;letter-spacing:-1.6px;color:#000">$14,750,000</div>
<svg class="ic" style="left:1716px;top:2771.76px;width:91.2px;height:84px" viewBox="0 0 11.40 10.50"><use href="#lockoff" width="11.40" height="10.50"/></svg>
<svg class="ic" style="left:1819.2px;top:2774.16px;width:520px;height:80px" viewBox="0 0 65.00 10.00"><use href="#slider" width="65.00" height="10.00"/></svg>
<svg class="ic" style="left:2192.4px;top:2775.36px;width:39.2px;height:76.8px" viewBox="0 0 4.90 9.60"><use href="#thumb" width="4.90" height="9.60"/></svg>
<svg class="ic" style="left:2376.8px;top:2779.76px;width:70.4px;height:69.6px" viewBox="0 0 8.80 8.70"><use href="#gridic" width="8.80" height="8.70"/></svg>
<svg class="ic" style="left:2486.4px;top:2776.16px;width:82.4px;height:76.8px" viewBox="0 0 10.30 9.60"><use href="#chartk" width="10.30" height="9.60"/></svg>
<svg class="ic" style="left:180.8px;top:246.4px;width:20.8px;height:36.8px" viewBox="0 0 2.600 4.600"><path d="M.2 .2L2.400 2.300L.2 4.400Z" fill="#4f7fcf"/></svg>
<div style="left:3131.2px;top:29.6px;width:2516px;height:2548.8px;background:#fff"></div>
<div style="left:3118.4px;top:2592px;width:2529.6px;height:16px;background:#eef2f8"></div>
<div style="left:3132.8px;top:2620px;width:2514.4px;height:837.6px;background:#fff"></div>
<svg class="ic" style="left:0;top:0;width:5664px;height:3480px" viewBox="0 0 708 435">
<rect x="426.7" y="36.4" width="226.10" height="49.10" fill="#f0f2f8"/>
<rect x="426.7" y="134.5" width="226.10" height="49.80" fill="#f0f2f8"/>
<rect x="426.7" y="233.6" width="226.10" height="49.30" fill="#f0f2f8"/>
<path d="M426.7 36.4H652.8" stroke="#c4d0e3" stroke-width=".7"/>
<path d="M426.7 85.5H652.8" stroke="#c4d0e3" stroke-width=".7"/>
<path d="M426.7 134.5H652.8" stroke="#c4d0e3" stroke-width=".7"/>
<path d="M426.7 184.3H652.8" stroke="#c4d0e3" stroke-width=".7"/>
<path d="M426.7 233.6H652.8" stroke="#c4d0e3" stroke-width=".7"/>
<path d="M426.7 36.1V282.9M652.8 36.1V282.9M426.3 282.9H653.1999999999999" stroke="#5977b4" stroke-width=".75" fill="none"/>
<path d="M424.30 282.90H426.7M652.8 282.90H655.20M425.40 273.04H426.7M652.8 273.04H654.10M425.40 263.18H426.7M652.8 263.18H654.10M425.40 253.32H426.7M652.8 253.32H654.10M425.40 243.46H426.7M652.8 243.46H654.10M424.30 233.60H426.7M652.8 233.60H655.20M425.40 223.74H426.7M652.8 223.74H654.10M425.40 213.88H426.7M652.8 213.88H654.10M425.40 204.02H426.7M652.8 204.02H654.10M425.40 194.16H426.7M652.8 194.16H654.10M424.30 184.30H426.7M652.8 184.30H655.20M425.40 174.44H426.7M652.8 174.44H654.10M425.40 164.58H426.7M652.8 164.58H654.10M425.40 154.72H426.7M652.8 154.72H654.10M425.40 144.86H426.7M652.8 144.86H654.10M424.30 135.00H426.7M652.8 135.00H655.20M425.40 125.14H426.7M652.8 125.14H654.10M425.40 115.28H426.7M652.8 115.28H654.10M425.40 105.42H426.7M652.8 105.42H654.10M425.40 95.56H426.7M652.8 95.56H654.10M424.30 85.70H426.7M652.8 85.70H655.20M425.40 75.84H426.7M652.8 75.84H654.10M425.40 65.98H426.7M652.8 65.98H654.10M425.40 56.12H426.7M652.8 56.12H654.10M425.40 46.26H426.7M652.8 46.26H654.10M424.30 36.40H426.7M652.8 36.40H655.20M429.10 282.9V284.29999999999995M441.30 282.9V285.29999999999995M453.50 282.9V284.29999999999995M465.70 282.9V284.29999999999995M477.90 282.9V284.29999999999995M490.10 282.9V284.29999999999995M502.30 282.9V285.29999999999995M514.50 282.9V284.29999999999995M526.70 282.9V284.29999999999995M538.90 282.9V284.29999999999995M551.10 282.9V284.29999999999995M563.30 282.9V285.29999999999995M575.50 282.9V284.29999999999995M587.70 282.9V284.29999999999995M599.90 282.9V284.29999999999995M612.10 282.9V284.29999999999995M624.30 282.9V285.29999999999995M636.50 282.9V284.29999999999995M648.70 282.9V284.29999999999995" stroke="#5977b4" stroke-width=".7" fill="none"/>
<path d="M440.1 282.9L454.3 282.6L464.6 281.7L469.7 280.8L472.3 279L474.9 276.5L479.4 270.1L482.6 264.3L485.2 262.4L488.4 254L491.6 245.7L494.5 239.7L497.6 231.4L501 222.2L503.9 215.3L506.8 210.7L509.7 199.2L512 190L514.7 178.3L519.7 159.9L522.3 149.7L523.8 145L526.9 133.3L531.5 121.3L535.7 111.5L537.8 104.7L539.9 100L541.3 95.2L545.3 85.5L549.9 76.8L553.9 67.6L557.4 61.3L560.4 56L564.6 50.7L568 47.5L571.5 44.9L574.9 43L578.4 41.5L585.3 39.2L594.5 37.7L601.4 37.1L608.3 36.7" stroke="#ff1010" stroke-width="1.25" fill="none" stroke-linejoin="round"/>
<path d="M473.6 282.9L486.5 282.3L493.6 281.3L498.1 279.5L500.6 275.9L504.5 270.1L509 263.7L512.9 256.6L516.1 251.4L519.3 243.7L520.8 238L524 229.1L526.9 219.9L530.3 210.7L534.4 200.3L536.3 194.7L538 190L539.3 186.4L542.3 174.9L546.9 159.9L549.3 149.7L550.9 145L551.6 140.2L554.5 133.3L557.9 121.3L563.1 109.2L565.4 104.7L568.2 100L569.4 97.5L573.4 88.3L575.7 81.4L576.9 76.8L579 73.7L580.9 69.9L582.4 67.9L585.7 61.6L589.3 57L590.1 55L593.3 51.8L596.8 48.4L599.7 47.2L602.5 43.8L606 40.9L611.7 39.4L619.8 38.6L629 37.8L639.3 36.7" stroke="#1010ff" stroke-width="1.25" fill="none" stroke-linejoin="round"/>
<path d="M557.400 61.300H585.700M519.700 159.900H546.900" stroke="#111" stroke-width="1.25"/>
<text x="579.9" y="56.1" font-family="Liberation Sans, sans-serif" font-size="6.6" fill="#222" text-anchor="middle">$47M</text>
<text x="541.6" y="154.6" font-family="Liberation Sans, sans-serif" font-size="6.6" fill="#222" text-anchor="middle">$45M</text>
<text x="421.2" y="38.70" font-family="Liberation Sans, sans-serif" font-size="6.3" fill="#2f426c" text-anchor="end">100 %</text>
<text x="658.4" y="38.70" font-family="Liberation Sans, sans-serif" font-size="6.3" fill="#2f426c">100 %</text>
<text x="421.2" y="87.80" font-family="Liberation Sans, sans-serif" font-size="6.3" fill="#2f426c" text-anchor="end">80 %</text>
<text x="658.4" y="87.80" font-family="Liberation Sans, sans-serif" font-size="6.3" fill="#2f426c">80 %</text>
<text x="421.2" y="136.80" font-family="Liberation Sans, sans-serif" font-size="6.3" fill="#2f426c" text-anchor="end">60 %</text>
<text x="658.4" y="136.80" font-family="Liberation Sans, sans-serif" font-size="6.3" fill="#2f426c">60 %</text>
<text x="421.2" y="186.60" font-family="Liberation Sans, sans-serif" font-size="6.3" fill="#2f426c" text-anchor="end">40 %</text>
<text x="658.4" y="186.60" font-family="Liberation Sans, sans-serif" font-size="6.3" fill="#2f426c">40 %</text>
<text x="421.2" y="235.90" font-family="Liberation Sans, sans-serif" font-size="6.3" fill="#2f426c" text-anchor="end">20 %</text>
<text x="658.4" y="235.90" font-family="Liberation Sans, sans-serif" font-size="6.3" fill="#2f426c">20 %</text>
<text x="421.2" y="285.20" font-family="Liberation Sans, sans-serif" font-size="6.3" fill="#2f426c" text-anchor="end">0 %</text>
<text x="658.4" y="285.20" font-family="Liberation Sans, sans-serif" font-size="6.3" fill="#2f426c">0 %</text>
<text x="441.30" y="294.1" font-family="Liberation Sans, sans-serif" font-size="6.3" fill="#2f426c" text-anchor="middle">$2,400M</text>
<text x="502.30" y="294.1" font-family="Liberation Sans, sans-serif" font-size="6.3" fill="#2f426c" text-anchor="middle">$2,500M</text>
<text x="563.30" y="294.1" font-family="Liberation Sans, sans-serif" font-size="6.3" fill="#2f426c" text-anchor="middle">$2,600M</text>
<text x="624.30" y="294.1" font-family="Liberation Sans, sans-serif" font-size="6.3" fill="#2f426c" text-anchor="middle">$2,700M</text>
<text x="548.4" y="23" font-family="Liberation Sans, sans-serif" font-size="9.6" fill="#222" text-anchor="middle">Risk Comparison</text>
<text x="539.0" y="308.1" font-family="Liberation Sans, sans-serif" font-size="8.3" fill="#4a5a7c" text-anchor="middle">Cost</text>
<text transform="translate(684.9 160) rotate(90)" font-family="Liberation Sans, sans-serif" font-size="8.67" fill="#4a5a7c" text-anchor="middle">Cummulative Frequency</text>
</svg>
<div style="left:3132.8px;top:2620px;width:2514.4px;height:98.4px;background:linear-gradient(#5c87c2,#4f7bb8)"></div>
<div style="left:3134.4px;top:2621.6px;width:233.6px;height:97.6px;background:#fff;border-radius:9.6px 9.6px 0 0"></div>
<div style="left:3372px;top:2624px;width:295.2px;height:92.8px;background:linear-gradient(#e9f1fc,#c9dcf5);border-radius:9.6px 9.6px 0 0"></div>
<div class="t" style="left:3134.4px;width:233.6px;text-align:center;top:2628.8px;height:88px;line-height:91.2px;font-size:52.4px">Curves</div>
<div class="t" style="left:3372px;width:295.2px;text-align:center;top:2628.8px;height:88px;line-height:91.2px;font-size:52.4px">Variances</div>
<div style="left:3132.8px;top:2718.4px;width:2514.4px;height:100px;background:linear-gradient(#f6f9fe,#e6effb 45%,#d5e3f8)"></div>
<div style="left:3132.8px;top:2816px;width:2514.4px;height:6.4px;background:#b5cdf0"></div>
<div style="left:3196px;top:2728px;width:4.8px;height:80px;background:#b9d0f1"></div>
<div style="left:3200.8px;top:2728px;width:4.8px;height:80px;background:#fff"></div>
<div style="left:3388px;top:2728px;width:4.8px;height:80px;background:#b9d0f1"></div>
<div style="left:3392.8px;top:2728px;width:4.8px;height:80px;background:#fff"></div>
<div style="left:3828px;top:2728px;width:4.8px;height:80px;background:#b9d0f1"></div>
<div style="left:3832.8px;top:2728px;width:4.8px;height:80px;background:#fff"></div>
<div style="left:4920px;top:2728px;width:4.8px;height:80px;background:#b9d0f1"></div>
<div style="left:4924.8px;top:2728px;width:4.8px;height:80px;background:#fff"></div>
<div style="left:5454.4px;top:2728px;width:4.8px;height:80px;background:#b9d0f1"></div>
<div style="left:5459.2px;top:2728px;width:4.8px;height:80px;background:#fff"></div>
<div style="left:5564px;top:2728px;width:4.8px;height:80px;background:#b9d0f1"></div>
<div style="left:5568.8px;top:2728px;width:4.8px;height:80px;background:#fff"></div>
<div class="t" style="left:3212.8px;top:2718.4px;height:99.2px;line-height:108.8px;font-size:52.4px;">Visible</div>
<div class="t" style="left:3412.8px;top:2718.4px;height:99.2px;line-height:108.8px;font-size:52.4px;">Color</div>
<div class="t" style="left:3854.4px;top:2718.4px;height:99.2px;line-height:108.8px;font-size:52.4px;">Name</div>
<div class="t" style="left:4924px;top:2718.4px;height:99.2px;line-height:108.8px;font-size:52.4px;width:515.2px;text-align:right">Deterministic Value</div>
<div class="t" style="left:5476.8px;top:2718.4px;height:99.2px;line-height:108.8px;font-size:52.4px;">R...</div>
<div style="left:3132.8px;top:2821.6px;width:2435.2px;height:99.2px;background:#e9f1fc"></div>
<div style="left:3132.8px;top:2915.68px;width:2435.2px;height:5.12px;background:#d3e0f4"></div>
<div style="left:3132.8px;top:2821.6px;width:67.2px;height:99.2px;background:#eef3fc;border-right:5.12px solid #d3e0f4;border-bottom:5.12px solid #d3e0f4;box-sizing:border-box"></div>
<div style="left:3389.44px;top:2821.6px;width:5.12px;height:99.2px;background:#d3e0f4"></div>
<div style="left:3829.44px;top:2821.6px;width:5.12px;height:99.2px;background:#d3e0f4"></div>
<div style="left:4921.44px;top:2821.6px;width:5.12px;height:99.2px;background:#d3e0f4"></div>
<div style="left:5455.84px;top:2821.6px;width:5.12px;height:99.2px;background:#d3e0f4"></div>
<div style="left:5565.44px;top:2821.6px;width:5.12px;height:99.2px;background:#d3e0f4"></div>
<svg class="ic" style="left:3264.8px;top:2839.2px;width:63.2px;height:64px" viewBox="0 0 7.900 8"><rect x=".4" y=".4" width="7.100" height="7.200" rx=".5" fill="#f6f7f9" stroke="#979da6" stroke-width=".7"/><rect x="1.400" y="1.400" width="5.100" height="5.200" fill="#e9ecf1"/><path d="M2 4.200L3.300 5.900L5.700 2" fill="none" stroke="#3c5ab0" stroke-width="1.300"/></svg>
<div style="left:3412px;top:2840.8px;width:66.4px;height:66.4px;background:#ff0000"></div>
<div class="t" style="left:3496px;top:2821.6px;height:99.2px;line-height:113.6px;font-size:52.4px;">Red</div>
<div class="t" style="left:3854.4px;top:2821.6px;height:99.2px;line-height:113.6px;font-size:52.4px;">Sheet1 | Sheet1</div>
<div class="t" style="left:4924px;top:2821.6px;height:99.2px;line-height:113.6px;font-size:52.4px;width:524.8px;text-align:right">$2,460M</div>
<svg class="ic" style="left:5472px;top:2834.4px;width:77.6px;height:78.4px" viewBox="0 0 9.700 9.800"><rect x=".35" y=".35" width="9" height="9.100" rx="1" fill="#fbfcfe" stroke="#a9c0e6" stroke-width=".65"/><path d="M2.100 1.900L8 8.300M8 1.900L2.100 8.300" stroke="#151515" stroke-width="1.200"/></svg>
<div style="left:3132.8px;top:3014.08px;width:2435.2px;height:5.12px;background:#d3e0f4"></div>
<div style="left:3132.8px;top:2920.8px;width:67.2px;height:98.4px;background:#eef3fc;border-right:5.12px solid #d3e0f4;border-bottom:5.12px solid #d3e0f4;box-sizing:border-box"></div>
<div style="left:3389.44px;top:2920.8px;width:5.12px;height:98.4px;background:#d3e0f4"></div>
<div style="left:3829.44px;top:2920.8px;width:5.12px;height:98.4px;background:#d3e0f4"></div>
<div style="left:4921.44px;top:2920.8px;width:5.12px;height:98.4px;background:#d3e0f4"></div>
<div style="left:5455.84px;top:2920.8px;width:5.12px;height:98.4px;background:#d3e0f4"></div>
<div style="left:5565.44px;top:2920.8px;width:5.12px;height:98.4px;background:#d3e0f4"></div>
<svg class="ic" style="left:3264.8px;top:2938.4px;width:63.2px;height:64px" viewBox="0 0 7.900 8"><rect x=".4" y=".4" width="7.100" height="7.200" rx=".5" fill="#f6f7f9" stroke="#979da6" stroke-width=".7"/><rect x="1.400" y="1.400" width="5.100" height="5.200" fill="#e9ecf1"/><path d="M2 4.200L3.300 5.900L5.700 2" fill="none" stroke="#3c5ab0" stroke-width="1.300"/></svg>
<div style="left:3412px;top:2940px;width:66.4px;height:66.4px;background:#0000ff"></div>
<div class="t" style="left:3496px;top:2920.8px;height:99.2px;line-height:113.6px;font-size:52.4px;">Blue</div>
<div class="t" style="left:3854.4px;top:2920.8px;height:99.2px;line-height:113.6px;font-size:52.4px;">Sheet1 | Sheet11</div>
<div class="t" style="left:4924px;top:2920.8px;height:99.2px;line-height:113.6px;font-size:52.4px;width:524.8px;text-align:right">$2,460M</div>
<svg class="ic" style="left:5472px;top:2933.6px;width:77.6px;height:78.4px" viewBox="0 0 9.700 9.800"><rect x=".35" y=".35" width="9" height="9.100" rx="1" fill="#fbfcfe" stroke="#a9c0e6" stroke-width=".65"/><path d="M2.100 1.900L8 8.300M8 1.900L2.100 8.300" stroke="#151515" stroke-width="1.200"/></svg>
<svg class="ic" style="left:3151.2px;top:2855.2px;width:20.8px;height:36.8px" viewBox="0 0 2.600 4.600"><path d="M.2 .2L2.400 2.300L.2 4.400Z" fill="#4f7fcf"/></svg>
<div style="left:5571.2px;top:2822.4px;width:76px;height:635.2px;background:#f1f1f1"></div>
<svg class="ic" style="left:5588.8px;top:2844.8px;width:40px;height:27.2px" viewBox="0 0 5 3.400"><path d="M.2 3.100L2.500 .4L4.800 3.100Z" fill="#c4c4cc"/></svg>
<svg class="ic" style="left:5591.2px;top:3404.8px;width:40px;height:27.2px" viewBox="0 0 5 3.400"><path d="M.2 .3L2.500 3L4.800 .3Z" fill="#b4b4bc"/></svg>
</div></body></html>
